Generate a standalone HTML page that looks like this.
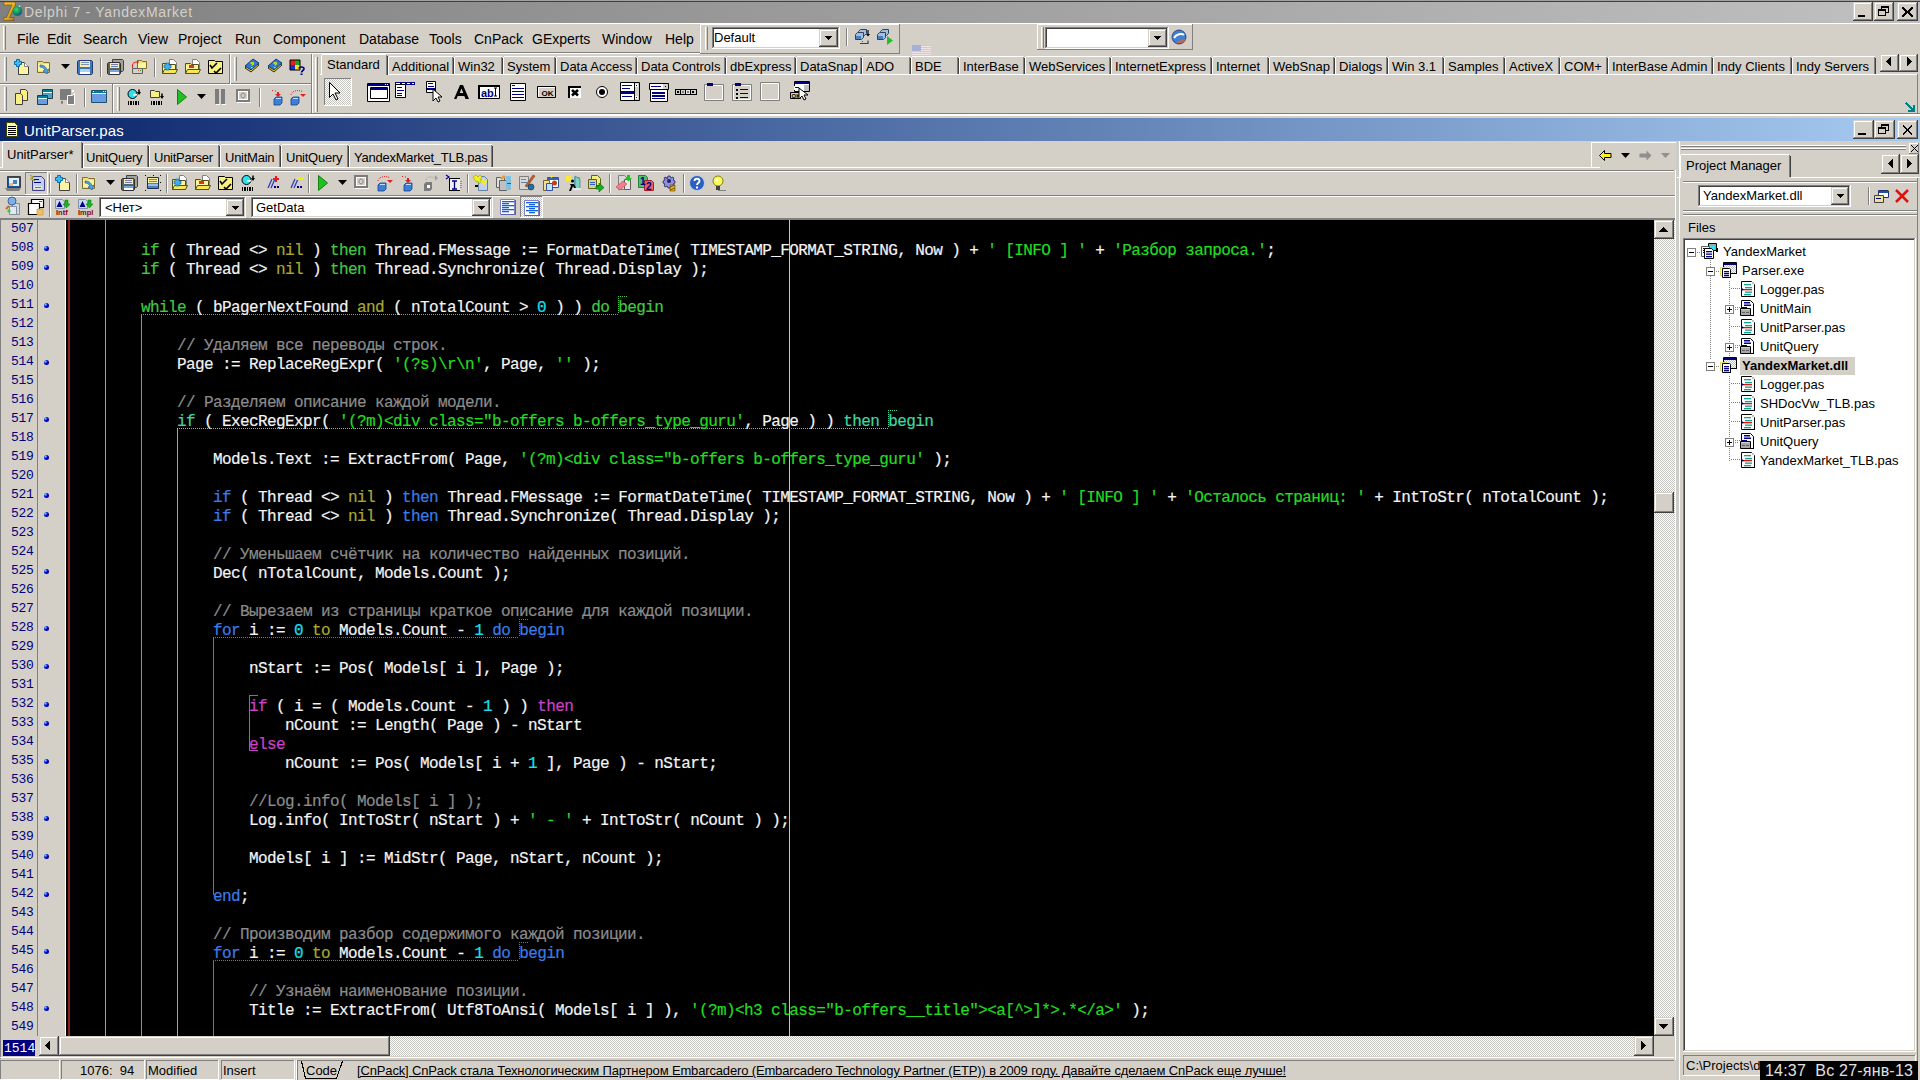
<!DOCTYPE html>
<html><head><meta charset="utf-8"><title>Delphi 7 - YandexMarket</title>
<style>
html,body{margin:0;padding:0;}
body{width:1920px;height:1080px;overflow:hidden;position:relative;background:#d4d0c8;font-family:"Liberation Sans",sans-serif;}
div{position:absolute;box-sizing:border-box;}
.t{white-space:pre;}
.code{font-family:"Liberation Mono",monospace;white-space:pre;}
</style></head><body>
<div style="left:0px;top:0px;width:1920px;height:1px;background:#a0a0a0"></div><div style="left:0px;top:1px;width:1920px;height:1px;background:#404040"></div><div style="left:0px;top:2px;width:1920px;height:21px;background:linear-gradient(to right,#808080,#c0c0c0)"></div><div class="t" style="left:24px;top:4px;font-size:14px;line-height:16px;color:#d4d0c8;letter-spacing:0.7px">Delphi 7 - YandexMarket</div><div style="left:1853px;top:2px;width:20px;height:19px;background:#404040"></div><div style="left:1853px;top:2px;width:19px;height:18px;background:#d4d0c8"></div><div style="left:1854px;top:3px;width:18px;height:17px;background:#808080"></div><div style="left:1854px;top:3px;width:17px;height:16px;background:#ffffff"></div><div style="left:1855px;top:4px;width:16px;height:15px;background:#d4d0c8"></div><div style="left:1874px;top:2px;width:20px;height:19px;background:#404040"></div><div style="left:1874px;top:2px;width:19px;height:18px;background:#d4d0c8"></div><div style="left:1875px;top:3px;width:18px;height:17px;background:#808080"></div><div style="left:1875px;top:3px;width:17px;height:16px;background:#ffffff"></div><div style="left:1876px;top:4px;width:16px;height:15px;background:#d4d0c8"></div><div style="left:1897px;top:2px;width:21px;height:19px;background:#404040"></div><div style="left:1897px;top:2px;width:20px;height:18px;background:#d4d0c8"></div><div style="left:1898px;top:3px;width:19px;height:17px;background:#808080"></div><div style="left:1898px;top:3px;width:18px;height:16px;background:#ffffff"></div><div style="left:1899px;top:4px;width:17px;height:15px;background:#d4d0c8"></div><div style="left:1858px;top:15px;width:7px;height:2px;background:#000"></div><svg style="position:absolute;left:1878px;top:6px" width="11" height="10" viewBox="0 0 11 10" shape-rendering="crispEdges"><path d="M3 0h8v7h-3v-1h2v-4h-6v1h-1z M3 0h8v2h-8z" fill="#000"/><path d="M0 3h8v7h-8z M1 5h6v4h-6z" fill="#000" fill-rule="evenodd"/><path d="M0 3h8v2h-8z" fill="#000"/></svg><svg style="position:absolute;left:1902px;top:7px" width="11" height="10" viewBox="0 0 11 10" shape-rendering="crispEdges"><path d="M1 1L10 9M10 1L1 9" stroke="#000" stroke-width="2" stroke-linecap="square"/></svg><div style="left:0px;top:23px;width:1920px;height:1px;background:#ffffff"></div><div style="left:3px;top:26px;width:1px;height:24px;background:#ffffff"></div><div style="left:4px;top:26px;width:1px;height:24px;background:#d4d0c8"></div><div style="left:5px;top:26px;width:1px;height:24px;background:#808080"></div><div class="t" style="left:17px;top:31px;font-size:14px;line-height:16px;color:#000;">File</div><div class="t" style="left:47px;top:31px;font-size:14px;line-height:16px;color:#000;">Edit</div><div class="t" style="left:83px;top:31px;font-size:14px;line-height:16px;color:#000;">Search</div><div class="t" style="left:138px;top:31px;font-size:14px;line-height:16px;color:#000;">View</div><div class="t" style="left:178px;top:31px;font-size:14px;line-height:16px;color:#000;">Project</div><div class="t" style="left:235px;top:31px;font-size:14px;line-height:16px;color:#000;">Run</div><div class="t" style="left:273px;top:31px;font-size:14px;line-height:16px;color:#000;">Component</div><div class="t" style="left:359px;top:31px;font-size:14px;line-height:16px;color:#000;">Database</div><div class="t" style="left:429px;top:31px;font-size:14px;line-height:16px;color:#000;">Tools</div><div class="t" style="left:474px;top:31px;font-size:14px;line-height:16px;color:#000;">CnPack</div><div class="t" style="left:532px;top:31px;font-size:14px;line-height:16px;color:#000;">GExperts</div><div class="t" style="left:602px;top:31px;font-size:14px;line-height:16px;color:#000;">Window</div><div class="t" style="left:665px;top:31px;font-size:14px;line-height:16px;color:#000;">Help</div><div style="left:0px;top:52px;width:700px;height:1px;background:#808080"></div><div style="left:0px;top:53px;width:700px;height:1px;background:#ffffff"></div><div style="left:700px;top:24px;width:200px;height:30px;background:#808080"></div><div style="left:700px;top:24px;width:199px;height:29px;background:#ffffff"></div><div style="left:701px;top:25px;width:198px;height:28px;background:#d4d0c8"></div><div style="left:705px;top:27px;width:1px;height:23px;background:#ffffff"></div><div style="left:706px;top:27px;width:1px;height:23px;background:#d4d0c8"></div><div style="left:707px;top:27px;width:1px;height:23px;background:#808080"></div><div style="left:712px;top:27px;width:128px;height:22px;background:#ffffff"></div><div style="left:712px;top:27px;width:127px;height:21px;background:#808080"></div><div style="left:713px;top:28px;width:126px;height:20px;background:#d4d0c8"></div><div style="left:713px;top:28px;width:125px;height:19px;background:#404040"></div><div style="left:714px;top:29px;width:124px;height:18px;background:#ffffff"></div><div class="t" style="left:714px;top:30px;font-size:13px;line-height:15px;color:#000;">Default</div><div style="left:819px;top:29px;width:19px;height:18px;background:#404040"></div><div style="left:819px;top:29px;width:18px;height:17px;background:#d4d0c8"></div><div style="left:820px;top:30px;width:17px;height:16px;background:#808080"></div><div style="left:820px;top:30px;width:16px;height:15px;background:#ffffff"></div><div style="left:821px;top:31px;width:15px;height:14px;background:#d4d0c8"></div><svg style="position:absolute;left:825px;top:36px" width="7" height="4" viewBox="0 0 7 4" shape-rendering="crispEdges"><path d="M0 0H7L3.5 4Z" fill="#000"/></svg><div style="left:846px;top:28px;width:1px;height:18px;background:#808080"></div><div style="left:847px;top:28px;width:1px;height:18px;background:#ffffff"></div><div style="left:1037px;top:24px;width:156px;height:26px;background:#808080"></div><div style="left:1037px;top:24px;width:155px;height:25px;background:#ffffff"></div><div style="left:1038px;top:25px;width:154px;height:24px;background:#d4d0c8"></div><div style="left:1041px;top:27px;width:1px;height:21px;background:#ffffff"></div><div style="left:1042px;top:27px;width:1px;height:21px;background:#d4d0c8"></div><div style="left:1043px;top:27px;width:1px;height:21px;background:#808080"></div><div style="left:1045px;top:27px;width:124px;height:22px;background:#ffffff"></div><div style="left:1045px;top:27px;width:123px;height:21px;background:#808080"></div><div style="left:1046px;top:28px;width:122px;height:20px;background:#d4d0c8"></div><div style="left:1046px;top:28px;width:121px;height:19px;background:#404040"></div><div style="left:1047px;top:29px;width:120px;height:18px;background:#ffffff"></div><div style="left:1148px;top:29px;width:19px;height:18px;background:#404040"></div><div style="left:1148px;top:29px;width:18px;height:17px;background:#d4d0c8"></div><div style="left:1149px;top:30px;width:17px;height:16px;background:#808080"></div><div style="left:1149px;top:30px;width:16px;height:15px;background:#ffffff"></div><div style="left:1150px;top:31px;width:15px;height:14px;background:#d4d0c8"></div><svg style="position:absolute;left:1154px;top:36px" width="7" height="4" viewBox="0 0 7 4" shape-rendering="crispEdges"><path d="M0 0H7L3.5 4Z" fill="#000"/></svg><div style="left:0px;top:83px;width:312px;height:1px;background:#808080"></div><div style="left:0px;top:84px;width:312px;height:1px;background:#ffffff"></div><div style="left:4px;top:57px;width:1px;height:24px;background:#ffffff"></div><div style="left:5px;top:57px;width:1px;height:24px;background:#d4d0c8"></div><div style="left:6px;top:57px;width:1px;height:24px;background:#808080"></div><div style="left:4px;top:87px;width:1px;height:24px;background:#ffffff"></div><div style="left:5px;top:87px;width:1px;height:24px;background:#d4d0c8"></div><div style="left:6px;top:87px;width:1px;height:24px;background:#808080"></div><div style="left:229px;top:54px;width:1px;height:30px;background:#808080"></div><div style="left:230px;top:54px;width:1px;height:30px;background:#ffffff"></div><div style="left:234px;top:57px;width:1px;height:24px;background:#ffffff"></div><div style="left:235px;top:57px;width:1px;height:24px;background:#d4d0c8"></div><div style="left:236px;top:57px;width:1px;height:24px;background:#808080"></div><div style="left:112px;top:84px;width:1px;height:30px;background:#808080"></div><div style="left:113px;top:84px;width:1px;height:30px;background:#ffffff"></div><div style="left:117px;top:87px;width:1px;height:24px;background:#ffffff"></div><div style="left:118px;top:87px;width:1px;height:24px;background:#d4d0c8"></div><div style="left:119px;top:87px;width:1px;height:24px;background:#808080"></div><div style="left:311px;top:54px;width:1px;height:60px;background:#808080"></div><div style="left:312px;top:54px;width:1px;height:60px;background:#ffffff"></div><div style="left:315px;top:57px;width:1px;height:55px;background:#ffffff"></div><div style="left:316px;top:57px;width:1px;height:55px;background:#d4d0c8"></div><div style="left:317px;top:57px;width:1px;height:55px;background:#808080"></div><div style="left:320px;top:74px;width:1597px;height:1px;background:#ffffff"></div><div style="left:388px;top:56px;width:66px;height:18px;background:#d4d0c8"></div><div style="left:388px;top:57px;width:1px;height:17px;background:#ffffff"></div><div style="left:389px;top:56px;width:64px;height:1px;background:#ffffff"></div><div style="left:452px;top:57px;width:1px;height:17px;background:#808080"></div><div style="left:453px;top:58px;width:1px;height:16px;background:#404040"></div><div class="t" style="left:392px;top:59px;font-size:13px;line-height:15px;color:#000;">Additional</div><div style="left:454px;top:56px;width:49px;height:18px;background:#d4d0c8"></div><div style="left:454px;top:57px;width:1px;height:17px;background:#ffffff"></div><div style="left:455px;top:56px;width:47px;height:1px;background:#ffffff"></div><div style="left:501px;top:57px;width:1px;height:17px;background:#808080"></div><div style="left:502px;top:58px;width:1px;height:16px;background:#404040"></div><div class="t" style="left:458px;top:59px;font-size:13px;line-height:15px;color:#000;">Win32</div><div style="left:503px;top:56px;width:53px;height:18px;background:#d4d0c8"></div><div style="left:503px;top:57px;width:1px;height:17px;background:#ffffff"></div><div style="left:504px;top:56px;width:51px;height:1px;background:#ffffff"></div><div style="left:554px;top:57px;width:1px;height:17px;background:#808080"></div><div style="left:555px;top:58px;width:1px;height:16px;background:#404040"></div><div class="t" style="left:507px;top:59px;font-size:13px;line-height:15px;color:#000;">System</div><div style="left:556px;top:56px;width:81px;height:18px;background:#d4d0c8"></div><div style="left:556px;top:57px;width:1px;height:17px;background:#ffffff"></div><div style="left:557px;top:56px;width:79px;height:1px;background:#ffffff"></div><div style="left:635px;top:57px;width:1px;height:17px;background:#808080"></div><div style="left:636px;top:58px;width:1px;height:16px;background:#404040"></div><div class="t" style="left:560px;top:59px;font-size:13px;line-height:15px;color:#000;">Data Access</div><div style="left:637px;top:56px;width:89px;height:18px;background:#d4d0c8"></div><div style="left:637px;top:57px;width:1px;height:17px;background:#ffffff"></div><div style="left:638px;top:56px;width:87px;height:1px;background:#ffffff"></div><div style="left:724px;top:57px;width:1px;height:17px;background:#808080"></div><div style="left:725px;top:58px;width:1px;height:16px;background:#404040"></div><div class="t" style="left:641px;top:59px;font-size:13px;line-height:15px;color:#000;">Data Controls</div><div style="left:726px;top:56px;width:70px;height:18px;background:#d4d0c8"></div><div style="left:726px;top:57px;width:1px;height:17px;background:#ffffff"></div><div style="left:727px;top:56px;width:68px;height:1px;background:#ffffff"></div><div style="left:794px;top:57px;width:1px;height:17px;background:#808080"></div><div style="left:795px;top:58px;width:1px;height:16px;background:#404040"></div><div class="t" style="left:730px;top:59px;font-size:13px;line-height:15px;color:#000;">dbExpress</div><div style="left:796px;top:56px;width:66px;height:18px;background:#d4d0c8"></div><div style="left:796px;top:57px;width:1px;height:17px;background:#ffffff"></div><div style="left:797px;top:56px;width:64px;height:1px;background:#ffffff"></div><div style="left:860px;top:57px;width:1px;height:17px;background:#808080"></div><div style="left:861px;top:58px;width:1px;height:16px;background:#404040"></div><div class="t" style="left:800px;top:59px;font-size:13px;line-height:15px;color:#000;">DataSnap</div><div style="left:862px;top:56px;width:49px;height:18px;background:#d4d0c8"></div><div style="left:862px;top:57px;width:1px;height:17px;background:#ffffff"></div><div style="left:863px;top:56px;width:47px;height:1px;background:#ffffff"></div><div style="left:909px;top:57px;width:1px;height:17px;background:#808080"></div><div style="left:910px;top:58px;width:1px;height:16px;background:#404040"></div><div class="t" style="left:866px;top:59px;font-size:13px;line-height:15px;color:#000;">ADO</div><div style="left:911px;top:56px;width:48px;height:18px;background:#d4d0c8"></div><div style="left:911px;top:57px;width:1px;height:17px;background:#ffffff"></div><div style="left:912px;top:56px;width:46px;height:1px;background:#ffffff"></div><div style="left:957px;top:57px;width:1px;height:17px;background:#808080"></div><div style="left:958px;top:58px;width:1px;height:16px;background:#404040"></div><div class="t" style="left:915px;top:59px;font-size:13px;line-height:15px;color:#000;">BDE</div><div style="left:959px;top:56px;width:66px;height:18px;background:#d4d0c8"></div><div style="left:959px;top:57px;width:1px;height:17px;background:#ffffff"></div><div style="left:960px;top:56px;width:64px;height:1px;background:#ffffff"></div><div style="left:1023px;top:57px;width:1px;height:17px;background:#808080"></div><div style="left:1024px;top:58px;width:1px;height:16px;background:#404040"></div><div class="t" style="left:963px;top:59px;font-size:13px;line-height:15px;color:#000;">InterBase</div><div style="left:1025px;top:56px;width:86px;height:18px;background:#d4d0c8"></div><div style="left:1025px;top:57px;width:1px;height:17px;background:#ffffff"></div><div style="left:1026px;top:56px;width:84px;height:1px;background:#ffffff"></div><div style="left:1109px;top:57px;width:1px;height:17px;background:#808080"></div><div style="left:1110px;top:58px;width:1px;height:16px;background:#404040"></div><div class="t" style="left:1029px;top:59px;font-size:13px;line-height:15px;color:#000;">WebServices</div><div style="left:1111px;top:56px;width:101px;height:18px;background:#d4d0c8"></div><div style="left:1111px;top:57px;width:1px;height:17px;background:#ffffff"></div><div style="left:1112px;top:56px;width:99px;height:1px;background:#ffffff"></div><div style="left:1210px;top:57px;width:1px;height:17px;background:#808080"></div><div style="left:1211px;top:58px;width:1px;height:16px;background:#404040"></div><div class="t" style="left:1115px;top:59px;font-size:13px;line-height:15px;color:#000;">InternetExpress</div><div style="left:1212px;top:56px;width:57px;height:18px;background:#d4d0c8"></div><div style="left:1212px;top:57px;width:1px;height:17px;background:#ffffff"></div><div style="left:1213px;top:56px;width:55px;height:1px;background:#ffffff"></div><div style="left:1267px;top:57px;width:1px;height:17px;background:#808080"></div><div style="left:1268px;top:58px;width:1px;height:16px;background:#404040"></div><div class="t" style="left:1216px;top:59px;font-size:13px;line-height:15px;color:#000;">Internet</div><div style="left:1269px;top:56px;width:66px;height:18px;background:#d4d0c8"></div><div style="left:1269px;top:57px;width:1px;height:17px;background:#ffffff"></div><div style="left:1270px;top:56px;width:64px;height:1px;background:#ffffff"></div><div style="left:1333px;top:57px;width:1px;height:17px;background:#808080"></div><div style="left:1334px;top:58px;width:1px;height:16px;background:#404040"></div><div class="t" style="left:1273px;top:59px;font-size:13px;line-height:15px;color:#000;">WebSnap</div><div style="left:1335px;top:56px;width:53px;height:18px;background:#d4d0c8"></div><div style="left:1335px;top:57px;width:1px;height:17px;background:#ffffff"></div><div style="left:1336px;top:56px;width:51px;height:1px;background:#ffffff"></div><div style="left:1386px;top:57px;width:1px;height:17px;background:#808080"></div><div style="left:1387px;top:58px;width:1px;height:16px;background:#404040"></div><div class="t" style="left:1339px;top:59px;font-size:13px;line-height:15px;color:#000;">Dialogs</div><div style="left:1388px;top:56px;width:56px;height:18px;background:#d4d0c8"></div><div style="left:1388px;top:57px;width:1px;height:17px;background:#ffffff"></div><div style="left:1389px;top:56px;width:54px;height:1px;background:#ffffff"></div><div style="left:1442px;top:57px;width:1px;height:17px;background:#808080"></div><div style="left:1443px;top:58px;width:1px;height:16px;background:#404040"></div><div class="t" style="left:1392px;top:59px;font-size:13px;line-height:15px;color:#000;">Win 3.1</div><div style="left:1444px;top:56px;width:61px;height:18px;background:#d4d0c8"></div><div style="left:1444px;top:57px;width:1px;height:17px;background:#ffffff"></div><div style="left:1445px;top:56px;width:59px;height:1px;background:#ffffff"></div><div style="left:1503px;top:57px;width:1px;height:17px;background:#808080"></div><div style="left:1504px;top:58px;width:1px;height:16px;background:#404040"></div><div class="t" style="left:1448px;top:59px;font-size:13px;line-height:15px;color:#000;">Samples</div><div style="left:1505px;top:56px;width:55px;height:18px;background:#d4d0c8"></div><div style="left:1505px;top:57px;width:1px;height:17px;background:#ffffff"></div><div style="left:1506px;top:56px;width:53px;height:1px;background:#ffffff"></div><div style="left:1558px;top:57px;width:1px;height:17px;background:#808080"></div><div style="left:1559px;top:58px;width:1px;height:16px;background:#404040"></div><div class="t" style="left:1509px;top:59px;font-size:13px;line-height:15px;color:#000;">ActiveX</div><div style="left:1560px;top:56px;width:48px;height:18px;background:#d4d0c8"></div><div style="left:1560px;top:57px;width:1px;height:17px;background:#ffffff"></div><div style="left:1561px;top:56px;width:46px;height:1px;background:#ffffff"></div><div style="left:1606px;top:57px;width:1px;height:17px;background:#808080"></div><div style="left:1607px;top:58px;width:1px;height:16px;background:#404040"></div><div class="t" style="left:1564px;top:59px;font-size:13px;line-height:15px;color:#000;">COM+</div><div style="left:1608px;top:56px;width:105px;height:18px;background:#d4d0c8"></div><div style="left:1608px;top:57px;width:1px;height:17px;background:#ffffff"></div><div style="left:1609px;top:56px;width:103px;height:1px;background:#ffffff"></div><div style="left:1711px;top:57px;width:1px;height:17px;background:#808080"></div><div style="left:1712px;top:58px;width:1px;height:16px;background:#404040"></div><div class="t" style="left:1612px;top:59px;font-size:13px;line-height:15px;color:#000;">InterBase Admin</div><div style="left:1713px;top:56px;width:79px;height:18px;background:#d4d0c8"></div><div style="left:1713px;top:57px;width:1px;height:17px;background:#ffffff"></div><div style="left:1714px;top:56px;width:77px;height:1px;background:#ffffff"></div><div style="left:1790px;top:57px;width:1px;height:17px;background:#808080"></div><div style="left:1791px;top:58px;width:1px;height:16px;background:#404040"></div><div class="t" style="left:1717px;top:59px;font-size:13px;line-height:15px;color:#000;">Indy Clients</div><div style="left:1792px;top:56px;width:84px;height:18px;background:#d4d0c8"></div><div style="left:1792px;top:57px;width:1px;height:17px;background:#ffffff"></div><div style="left:1793px;top:56px;width:82px;height:1px;background:#ffffff"></div><div style="left:1874px;top:57px;width:1px;height:17px;background:#808080"></div><div style="left:1875px;top:58px;width:1px;height:16px;background:#404040"></div><div class="t" style="left:1796px;top:59px;font-size:13px;line-height:15px;color:#000;">Indy Servers</div><div style="left:321px;top:54px;width:67px;height:21px;background:#d4d0c8"></div><div style="left:321px;top:55px;width:1px;height:20px;background:#ffffff"></div><div style="left:322px;top:54px;width:64px;height:1px;background:#ffffff"></div><div style="left:386px;top:55px;width:1px;height:20px;background:#808080"></div><div style="left:387px;top:56px;width:1px;height:19px;background:#404040"></div><div class="t" style="left:327px;top:57px;font-size:13px;line-height:15px;color:#000;">Standard</div><div style="left:1880px;top:54px;width:19px;height:18px;background:#404040"></div><div style="left:1880px;top:54px;width:18px;height:17px;background:#d4d0c8"></div><div style="left:1881px;top:55px;width:17px;height:16px;background:#808080"></div><div style="left:1881px;top:55px;width:16px;height:15px;background:#ffffff"></div><div style="left:1882px;top:56px;width:15px;height:14px;background:#d4d0c8"></div><div style="left:1899px;top:54px;width:19px;height:18px;background:#404040"></div><div style="left:1899px;top:54px;width:18px;height:17px;background:#d4d0c8"></div><div style="left:1900px;top:55px;width:17px;height:16px;background:#808080"></div><div style="left:1900px;top:55px;width:16px;height:15px;background:#ffffff"></div><div style="left:1901px;top:56px;width:15px;height:14px;background:#d4d0c8"></div><svg style="position:absolute;left:1886px;top:57px" width="5" height="9" viewBox="0 0 5 9" shape-rendering="crispEdges"><path d="M5 0V9L0 4.5Z" fill="#000"/></svg><svg style="position:absolute;left:1907px;top:57px" width="5" height="9" viewBox="0 0 5 9" shape-rendering="crispEdges"><path d="M0 0V9L5 4.5Z" fill="#000"/></svg><div style="left:1917px;top:74px;width:1px;height:40px;background:#808080"></div><svg style="position:absolute;left:1905px;top:102px" width="11" height="10" viewBox="0 0 11 10" shape-rendering="crispEdges"><path d="M1 1L8 8M9 3V9H3" fill="none" stroke="#008080" stroke-width="2"/></svg><div style="left:324px;top:78px;width:28px;height:28px;background:#fff"></div><div style="left:324px;top:78px;width:27px;height:27px;background:#808080"></div><div style="left:325px;top:79px;width:26px;height:26px;background:repeating-conic-gradient(#ffffff 0% 25%, #c4c4c0 0% 50%) 0 0/2px 2px"></div><div style="left:0px;top:113px;width:1920px;height:1px;background:#808080"></div><div style="left:0px;top:114px;width:1920px;height:1px;background:#ffffff"></div><div style="left:0px;top:115px;width:1920px;height:1px;background:#ffffff"></div><div style="left:0px;top:116px;width:1920px;height:2px;background:#d4d0c8"></div><div style="left:0px;top:118px;width:1920px;height:23px;background:linear-gradient(to right,#0a246a,#a6caf0)"></div><div class="t" style="left:24px;top:122px;font-size:15px;line-height:17px;color:#ffffff;letter-spacing:0.1px">UnitParser.pas</div><div style="left:1853px;top:120px;width:21px;height:19px;background:#404040"></div><div style="left:1853px;top:120px;width:20px;height:18px;background:#d4d0c8"></div><div style="left:1854px;top:121px;width:19px;height:17px;background:#808080"></div><div style="left:1854px;top:121px;width:18px;height:16px;background:#ffffff"></div><div style="left:1855px;top:122px;width:17px;height:15px;background:#d4d0c8"></div><div style="left:1874px;top:120px;width:21px;height:19px;background:#404040"></div><div style="left:1874px;top:120px;width:20px;height:18px;background:#d4d0c8"></div><div style="left:1875px;top:121px;width:19px;height:17px;background:#808080"></div><div style="left:1875px;top:121px;width:18px;height:16px;background:#ffffff"></div><div style="left:1876px;top:122px;width:17px;height:15px;background:#d4d0c8"></div><div style="left:1897px;top:120px;width:21px;height:19px;background:#404040"></div><div style="left:1897px;top:120px;width:20px;height:18px;background:#d4d0c8"></div><div style="left:1898px;top:121px;width:19px;height:17px;background:#808080"></div><div style="left:1898px;top:121px;width:18px;height:16px;background:#ffffff"></div><div style="left:1899px;top:122px;width:17px;height:15px;background:#d4d0c8"></div><div style="left:1858px;top:133px;width:8px;height:2px;background:#000"></div><svg style="position:absolute;left:1878px;top:124px" width="11" height="10" viewBox="0 0 11 10" shape-rendering="crispEdges"><path d="M3 0h8v7h-3v-1h2v-4h-6v1h-1z M3 0h8v2h-8z" fill="#000"/><path d="M0 3h8v7h-8z M1 5h6v4h-6z" fill="#000" fill-rule="evenodd"/><path d="M0 3h8v2h-8z" fill="#000"/></svg><svg style="position:absolute;left:1902px;top:125px" width="11" height="10" viewBox="0 0 11 10" shape-rendering="crispEdges"><path d="M1.5 1L9.5 9M9.5 1L1.5 9" stroke="#000" stroke-width="2" stroke-linecap="square"/></svg><div style="left:0px;top:167px;width:1600px;height:1px;background:#ffffff"></div><div style="left:83px;top:145px;width:1px;height:22px;background:#ffffff"></div><div style="left:84px;top:144px;width:64px;height:1px;background:#ffffff"></div><div style="left:147px;top:145px;width:1px;height:22px;background:#808080"></div><div style="left:148px;top:146px;width:1px;height:21px;background:#404040"></div><div class="t" style="left:86px;top:150px;font-size:13px;line-height:15px;color:#000;letter-spacing:-0.25px">UnitQuery</div><div style="left:149px;top:145px;width:1px;height:22px;background:#ffffff"></div><div style="left:150px;top:144px;width:69px;height:1px;background:#ffffff"></div><div style="left:218px;top:145px;width:1px;height:22px;background:#808080"></div><div style="left:219px;top:146px;width:1px;height:21px;background:#404040"></div><div class="t" style="left:154px;top:150px;font-size:13px;line-height:15px;color:#000;letter-spacing:-0.25px">UnitParser</div><div style="left:220px;top:145px;width:1px;height:22px;background:#ffffff"></div><div style="left:221px;top:144px;width:59px;height:1px;background:#ffffff"></div><div style="left:279px;top:145px;width:1px;height:22px;background:#808080"></div><div style="left:280px;top:146px;width:1px;height:21px;background:#404040"></div><div class="t" style="left:225px;top:150px;font-size:13px;line-height:15px;color:#000;letter-spacing:-0.25px">UnitMain</div><div style="left:281px;top:145px;width:1px;height:22px;background:#ffffff"></div><div style="left:282px;top:144px;width:66px;height:1px;background:#ffffff"></div><div style="left:347px;top:145px;width:1px;height:22px;background:#808080"></div><div style="left:348px;top:146px;width:1px;height:21px;background:#404040"></div><div class="t" style="left:286px;top:150px;font-size:13px;line-height:15px;color:#000;letter-spacing:-0.25px">UnitQuery</div><div style="left:349px;top:145px;width:1px;height:22px;background:#ffffff"></div><div style="left:350px;top:144px;width:142px;height:1px;background:#ffffff"></div><div style="left:491px;top:145px;width:1px;height:22px;background:#808080"></div><div style="left:492px;top:146px;width:1px;height:21px;background:#404040"></div><div class="t" style="left:354px;top:150px;font-size:13px;line-height:15px;color:#000;letter-spacing:-0.25px">YandexMarket_TLB.pas</div><div style="left:2px;top:141px;width:81px;height:27px;background:#d4d0c8"></div><div style="left:2px;top:142px;width:1px;height:26px;background:#ffffff"></div><div style="left:3px;top:141px;width:78px;height:1px;background:#ffffff"></div><div style="left:81px;top:142px;width:1px;height:26px;background:#808080"></div><div style="left:82px;top:143px;width:1px;height:25px;background:#404040"></div><div class="t" style="left:7px;top:147px;font-size:13px;line-height:15px;color:#000;">UnitParser*</div><div style="left:1591px;top:142px;width:85px;height:1px;background:#ffffff"></div><div style="left:1591px;top:143px;width:1px;height:24px;background:#ffffff"></div><div style="left:0px;top:170px;width:1674px;height:1px;background:#808080"></div><div style="left:0px;top:171px;width:1674px;height:1px;background:#ffffff"></div><div style="left:0px;top:195px;width:1677px;height:1px;background:#808080"></div><div style="left:0px;top:196px;width:1677px;height:1px;background:#ffffff"></div><div style="left:99px;top:197px;width:147px;height:21px;background:#ffffff"></div><div style="left:99px;top:197px;width:146px;height:20px;background:#808080"></div><div style="left:100px;top:198px;width:145px;height:19px;background:#d4d0c8"></div><div style="left:100px;top:198px;width:144px;height:18px;background:#404040"></div><div style="left:101px;top:199px;width:143px;height:17px;background:#ffffff"></div><div class="t" style="left:105px;top:200px;font-size:13px;line-height:15px;color:#000;">&lt;Нет&gt;</div><div style="left:226px;top:199px;width:18px;height:17px;background:#404040"></div><div style="left:226px;top:199px;width:17px;height:16px;background:#d4d0c8"></div><div style="left:227px;top:200px;width:16px;height:15px;background:#808080"></div><div style="left:227px;top:200px;width:15px;height:14px;background:#ffffff"></div><div style="left:228px;top:201px;width:14px;height:13px;background:#d4d0c8"></div><svg style="position:absolute;left:232px;top:206px" width="7" height="4" viewBox="0 0 7 4" shape-rendering="crispEdges"><path d="M0 0H7L3.5 4Z" fill="#000"/></svg><div style="left:251px;top:197px;width:242px;height:21px;background:#ffffff"></div><div style="left:251px;top:197px;width:241px;height:20px;background:#808080"></div><div style="left:252px;top:198px;width:240px;height:19px;background:#d4d0c8"></div><div style="left:252px;top:198px;width:239px;height:18px;background:#404040"></div><div style="left:253px;top:199px;width:238px;height:17px;background:#ffffff"></div><div class="t" style="left:256px;top:200px;font-size:13px;line-height:15px;color:#000;">GetData</div><div style="left:472px;top:199px;width:18px;height:17px;background:#404040"></div><div style="left:472px;top:199px;width:17px;height:16px;background:#d4d0c8"></div><div style="left:473px;top:200px;width:16px;height:15px;background:#808080"></div><div style="left:473px;top:200px;width:15px;height:14px;background:#ffffff"></div><div style="left:474px;top:201px;width:14px;height:13px;background:#d4d0c8"></div><svg style="position:absolute;left:478px;top:206px" width="7" height="4" viewBox="0 0 7 4" shape-rendering="crispEdges"><path d="M0 0H7L3.5 4Z" fill="#000"/></svg><div style="left:0px;top:218px;width:1677px;height:1px;background:#808080"></div><div style="left:0px;top:219px;width:1677px;height:1px;background:#ffffff"></div><div style="left:0px;top:219px;width:1px;height:840px;background:#808080"></div><div style="left:1px;top:220px;width:37px;height:816px;background:#d4d0c8"></div><div style="left:37px;top:220px;width:1px;height:816px;background:#808080"></div><div style="left:38px;top:220px;width:27px;height:816px;background:#d4d0c8"></div><div style="left:65px;top:220px;width:1px;height:816px;background:#ffffff"></div><div style="left:66px;top:220px;width:1588px;height:816px;background:#000"></div><div style="left:0px;top:219px;width:1677px;height:1px;background:#808080"></div><div style="left:68px;top:220px;width:2px;height:816px;background:#8c2020"></div><div style="left:105px;top:220px;width:1px;height:816px;background:#d8904c"></div><div style="left:141px;top:314px;width:1px;height:722px;background:#44c844"></div><div style="left:177px;top:428px;width:1px;height:608px;background:#40d6a0"></div><div style="left:213px;top:637px;width:1px;height:258px;background:#3c7ce8"></div><div style="left:213px;top:960px;width:1px;height:76px;background:#3c7ce8"></div><div style="left:249px;top:695px;width:1px;height:56px;background:#cc40cc"></div><div style="left:249px;top:695px;width:9px;height:1px;background:#cc40cc"></div><div style="left:249px;top:750px;width:9px;height:1px;background:#cc40cc"></div><div style="left:789px;top:220px;width:1px;height:816px;background:#c4c4c4"></div><div style="left:141px;top:314px;width:477px;height:1px;background:repeating-linear-gradient(to right,#44c844 0 1px,transparent 1px 2px)"></div><div style="left:618px;top:296px;width:1px;height:18px;background:repeating-linear-gradient(to bottom,#44c844 0 1px,transparent 1px 2px)"></div><div style="left:618px;top:296px;width:9px;height:1px;background:repeating-linear-gradient(to right,#44c844 0 1px,transparent 1px 2px)"></div><div style="left:177px;top:428px;width:711px;height:1px;background:repeating-linear-gradient(to right,#40d6a0 0 1px,transparent 1px 2px)"></div><div style="left:888px;top:410px;width:1px;height:18px;background:repeating-linear-gradient(to bottom,#40d6a0 0 1px,transparent 1px 2px)"></div><div style="left:888px;top:410px;width:9px;height:1px;background:repeating-linear-gradient(to right,#40d6a0 0 1px,transparent 1px 2px)"></div><div style="left:213px;top:637px;width:306px;height:1px;background:repeating-linear-gradient(to right,#3c7ce8 0 1px,transparent 1px 2px)"></div><div style="left:519px;top:619px;width:1px;height:18px;background:repeating-linear-gradient(to bottom,#3c7ce8 0 1px,transparent 1px 2px)"></div><div style="left:519px;top:619px;width:9px;height:1px;background:repeating-linear-gradient(to right,#3c7ce8 0 1px,transparent 1px 2px)"></div><div style="left:213px;top:960px;width:306px;height:1px;background:repeating-linear-gradient(to right,#3c7ce8 0 1px,transparent 1px 2px)"></div><div style="left:519px;top:942px;width:1px;height:18px;background:repeating-linear-gradient(to bottom,#3c7ce8 0 1px,transparent 1px 2px)"></div><div style="left:519px;top:942px;width:9px;height:1px;background:repeating-linear-gradient(to right,#3c7ce8 0 1px,transparent 1px 2px)"></div><div class="code" style="left:69px;top:242px;font-size:16px;line-height:19px;letter-spacing:-0.6px;-webkit-text-stroke:0.2px currentColor"><span style="color:#f4f4f4">        </span><span style="color:#44c844">if</span><span style="color:#f4f4f4"> ( Thread &lt;&gt; </span><span style="color:#a8a830">nil</span><span style="color:#f4f4f4"> ) </span><span style="color:#44c844">then</span><span style="color:#f4f4f4"> Thread.FMessage := FormatDateTime( TIMESTAMP_FORMAT_STRING, Now ) + </span><span style="color:#22dd22">&#x27; [INFO ] &#x27;</span><span style="color:#f4f4f4"> + </span><span style="color:#22dd22">&#x27;Разбор запроса.&#x27;</span><span style="color:#f4f4f4">;</span></div><div class="code" style="left:69px;top:261px;font-size:16px;line-height:19px;letter-spacing:-0.6px;-webkit-text-stroke:0.2px currentColor"><span style="color:#f4f4f4">        </span><span style="color:#44c844">if</span><span style="color:#f4f4f4"> ( Thread &lt;&gt; </span><span style="color:#a8a830">nil</span><span style="color:#f4f4f4"> ) </span><span style="color:#44c844">then</span><span style="color:#f4f4f4"> Thread.Synchronize( Thread.Display );</span></div><div class="code" style="left:69px;top:299px;font-size:16px;line-height:19px;letter-spacing:-0.6px;-webkit-text-stroke:0.2px currentColor"><span style="color:#f4f4f4">        </span><span style="color:#44c844">while</span><span style="color:#f4f4f4"> ( bPagerNextFound </span><span style="color:#a8a830">and</span><span style="color:#f4f4f4"> ( nTotalCount &gt; </span><span style="color:#18e0f0">0</span><span style="color:#f4f4f4"> ) ) </span><span style="color:#44c844">do</span><span style="color:#f4f4f4"> </span><span style="color:#44c844">begin</span></div><div class="code" style="left:69px;top:337px;font-size:16px;line-height:19px;letter-spacing:-0.6px;-webkit-text-stroke:0.2px currentColor"><span style="color:#f4f4f4">            </span><span style="color:#8c8c8c">// Удаляем все переводы строк.</span></div><div class="code" style="left:69px;top:356px;font-size:16px;line-height:19px;letter-spacing:-0.6px;-webkit-text-stroke:0.2px currentColor"><span style="color:#f4f4f4">            Page := ReplaceRegExpr( </span><span style="color:#22dd22">&#x27;(?s)\r\n&#x27;</span><span style="color:#f4f4f4">, Page, </span><span style="color:#22dd22">&#x27;&#x27;</span><span style="color:#f4f4f4"> );</span></div><div class="code" style="left:69px;top:394px;font-size:16px;line-height:19px;letter-spacing:-0.6px;-webkit-text-stroke:0.2px currentColor"><span style="color:#f4f4f4">            </span><span style="color:#8c8c8c">// Разделяем описание каждой модели.</span></div><div class="code" style="left:69px;top:413px;font-size:16px;line-height:19px;letter-spacing:-0.6px;-webkit-text-stroke:0.2px currentColor"><span style="color:#f4f4f4">            </span><span style="color:#40d6a0">if</span><span style="color:#f4f4f4"> ( ExecRegExpr( </span><span style="color:#22dd22">&#x27;(?m)&lt;div class=&quot;b-offers b-offers_type_guru&#x27;</span><span style="color:#f4f4f4">, Page ) ) </span><span style="color:#40d6a0">then</span><span style="color:#f4f4f4"> </span><span style="color:#40d6a0">begin</span></div><div class="code" style="left:69px;top:451px;font-size:16px;line-height:19px;letter-spacing:-0.6px;-webkit-text-stroke:0.2px currentColor"><span style="color:#f4f4f4">                Models.Text := ExtractFrom( Page, </span><span style="color:#22dd22">&#x27;(?m)&lt;div class=&quot;b-offers b-offers_type_guru&#x27;</span><span style="color:#f4f4f4"> );</span></div><div class="code" style="left:69px;top:489px;font-size:16px;line-height:19px;letter-spacing:-0.6px;-webkit-text-stroke:0.2px currentColor"><span style="color:#f4f4f4">                </span><span style="color:#3c7ce8">if</span><span style="color:#f4f4f4"> ( Thread &lt;&gt; </span><span style="color:#a8a830">nil</span><span style="color:#f4f4f4"> ) </span><span style="color:#3c7ce8">then</span><span style="color:#f4f4f4"> Thread.FMessage := FormatDateTime( TIMESTAMP_FORMAT_STRING, Now ) + </span><span style="color:#22dd22">&#x27; [INFO ] &#x27;</span><span style="color:#f4f4f4"> + </span><span style="color:#22dd22">&#x27;Осталось страниц: &#x27;</span><span style="color:#f4f4f4"> + IntToStr( nTotalCount );</span></div><div class="code" style="left:69px;top:508px;font-size:16px;line-height:19px;letter-spacing:-0.6px;-webkit-text-stroke:0.2px currentColor"><span style="color:#f4f4f4">                </span><span style="color:#3c7ce8">if</span><span style="color:#f4f4f4"> ( Thread &lt;&gt; </span><span style="color:#a8a830">nil</span><span style="color:#f4f4f4"> ) </span><span style="color:#3c7ce8">then</span><span style="color:#f4f4f4"> Thread.Synchronize( Thread.Display );</span></div><div class="code" style="left:69px;top:546px;font-size:16px;line-height:19px;letter-spacing:-0.6px;-webkit-text-stroke:0.2px currentColor"><span style="color:#f4f4f4">                </span><span style="color:#8c8c8c">// Уменьшаем счётчик на количество найденных позиций.</span></div><div class="code" style="left:69px;top:565px;font-size:16px;line-height:19px;letter-spacing:-0.6px;-webkit-text-stroke:0.2px currentColor"><span style="color:#f4f4f4">                Dec( nTotalCount, Models.Count );</span></div><div class="code" style="left:69px;top:603px;font-size:16px;line-height:19px;letter-spacing:-0.6px;-webkit-text-stroke:0.2px currentColor"><span style="color:#f4f4f4">                </span><span style="color:#8c8c8c">// Вырезаем из страницы краткое описание для каждой позиции.</span></div><div class="code" style="left:69px;top:622px;font-size:16px;line-height:19px;letter-spacing:-0.6px;-webkit-text-stroke:0.2px currentColor"><span style="color:#f4f4f4">                </span><span style="color:#3c7ce8">for</span><span style="color:#f4f4f4"> i := </span><span style="color:#18e0f0">0</span><span style="color:#f4f4f4"> </span><span style="color:#a8a830">to</span><span style="color:#f4f4f4"> Models.Count - </span><span style="color:#18e0f0">1</span><span style="color:#f4f4f4"> </span><span style="color:#3c7ce8">do</span><span style="color:#f4f4f4"> </span><span style="color:#3c7ce8">begin</span></div><div class="code" style="left:69px;top:660px;font-size:16px;line-height:19px;letter-spacing:-0.6px;-webkit-text-stroke:0.2px currentColor"><span style="color:#f4f4f4">                    nStart := Pos( Models[ i ], Page );</span></div><div class="code" style="left:69px;top:698px;font-size:16px;line-height:19px;letter-spacing:-0.6px;-webkit-text-stroke:0.2px currentColor"><span style="color:#f4f4f4">                    </span><span style="color:#cc40cc">if</span><span style="color:#f4f4f4"> ( i = ( Models.Count - </span><span style="color:#18e0f0">1</span><span style="color:#f4f4f4"> ) ) </span><span style="color:#cc40cc">then</span></div><div class="code" style="left:69px;top:717px;font-size:16px;line-height:19px;letter-spacing:-0.6px;-webkit-text-stroke:0.2px currentColor"><span style="color:#f4f4f4">                        nCount := Length( Page ) - nStart</span></div><div class="code" style="left:69px;top:736px;font-size:16px;line-height:19px;letter-spacing:-0.6px;-webkit-text-stroke:0.2px currentColor"><span style="color:#f4f4f4">                    </span><span style="color:#cc40cc">else</span></div><div class="code" style="left:69px;top:755px;font-size:16px;line-height:19px;letter-spacing:-0.6px;-webkit-text-stroke:0.2px currentColor"><span style="color:#f4f4f4">                        nCount := Pos( Models[ i + </span><span style="color:#18e0f0">1</span><span style="color:#f4f4f4"> ], Page ) - nStart;</span></div><div class="code" style="left:69px;top:793px;font-size:16px;line-height:19px;letter-spacing:-0.6px;-webkit-text-stroke:0.2px currentColor"><span style="color:#f4f4f4">                    </span><span style="color:#8c8c8c">//Log.info( Models[ i ] );</span></div><div class="code" style="left:69px;top:812px;font-size:16px;line-height:19px;letter-spacing:-0.6px;-webkit-text-stroke:0.2px currentColor"><span style="color:#f4f4f4">                    Log.info( IntToStr( nStart ) + </span><span style="color:#22dd22">&#x27; - &#x27;</span><span style="color:#f4f4f4"> + IntToStr( nCount ) );</span></div><div class="code" style="left:69px;top:850px;font-size:16px;line-height:19px;letter-spacing:-0.6px;-webkit-text-stroke:0.2px currentColor"><span style="color:#f4f4f4">                    Models[ i ] := MidStr( Page, nStart, nCount );</span></div><div class="code" style="left:69px;top:888px;font-size:16px;line-height:19px;letter-spacing:-0.6px;-webkit-text-stroke:0.2px currentColor"><span style="color:#f4f4f4">                </span><span style="color:#3c7ce8">end</span><span style="color:#f4f4f4">;</span></div><div class="code" style="left:69px;top:926px;font-size:16px;line-height:19px;letter-spacing:-0.6px;-webkit-text-stroke:0.2px currentColor"><span style="color:#f4f4f4">                </span><span style="color:#8c8c8c">// Производим разбор содержимого каждой позиции.</span></div><div class="code" style="left:69px;top:945px;font-size:16px;line-height:19px;letter-spacing:-0.6px;-webkit-text-stroke:0.2px currentColor"><span style="color:#f4f4f4">                </span><span style="color:#3c7ce8">for</span><span style="color:#f4f4f4"> i := </span><span style="color:#18e0f0">0</span><span style="color:#f4f4f4"> </span><span style="color:#a8a830">to</span><span style="color:#f4f4f4"> Models.Count - </span><span style="color:#18e0f0">1</span><span style="color:#f4f4f4"> </span><span style="color:#3c7ce8">do</span><span style="color:#f4f4f4"> </span><span style="color:#3c7ce8">begin</span></div><div class="code" style="left:69px;top:983px;font-size:16px;line-height:19px;letter-spacing:-0.6px;-webkit-text-stroke:0.2px currentColor"><span style="color:#f4f4f4">                    </span><span style="color:#8c8c8c">// Узнаём наименование позиции.</span></div><div class="code" style="left:69px;top:1002px;font-size:16px;line-height:19px;letter-spacing:-0.6px;-webkit-text-stroke:0.2px currentColor"><span style="color:#f4f4f4">                    Title := ExtractFrom( Utf8ToAnsi( Models[ i ] ), </span><span style="color:#22dd22">&#x27;(?m)&lt;h3 class=&quot;b-offers__title&quot;&gt;&lt;a[^&gt;]*&gt;.*&lt;/a&gt;&#x27;</span><span style="color:#f4f4f4"> );</span></div><div class="code" style="left:11px;top:221px;font-size:13px;line-height:15px;color:#000080;letter-spacing:-0.3px">507</div><div class="code" style="left:11px;top:240px;font-size:13px;line-height:15px;color:#000080;letter-spacing:-0.3px">508</div><div style="left:43.5px;top:245.5px;width:5px;height:5px;background:radial-gradient(circle at 30% 30%,#60d0ff 0,#0000d0 45%,#000080 100%);border-radius:50%"></div><div class="code" style="left:11px;top:259px;font-size:13px;line-height:15px;color:#000080;letter-spacing:-0.3px">509</div><div style="left:43.5px;top:264.5px;width:5px;height:5px;background:radial-gradient(circle at 30% 30%,#60d0ff 0,#0000d0 45%,#000080 100%);border-radius:50%"></div><div class="code" style="left:11px;top:278px;font-size:13px;line-height:15px;color:#000080;letter-spacing:-0.3px">510</div><div class="code" style="left:11px;top:297px;font-size:13px;line-height:15px;color:#000080;letter-spacing:-0.3px">511</div><div style="left:43.5px;top:302.5px;width:5px;height:5px;background:radial-gradient(circle at 30% 30%,#60d0ff 0,#0000d0 45%,#000080 100%);border-radius:50%"></div><div class="code" style="left:11px;top:316px;font-size:13px;line-height:15px;color:#000080;letter-spacing:-0.3px">512</div><div class="code" style="left:11px;top:335px;font-size:13px;line-height:15px;color:#000080;letter-spacing:-0.3px">513</div><div class="code" style="left:11px;top:354px;font-size:13px;line-height:15px;color:#000080;letter-spacing:-0.3px">514</div><div style="left:43.5px;top:359.5px;width:5px;height:5px;background:radial-gradient(circle at 30% 30%,#60d0ff 0,#0000d0 45%,#000080 100%);border-radius:50%"></div><div class="code" style="left:11px;top:373px;font-size:13px;line-height:15px;color:#000080;letter-spacing:-0.3px">515</div><div class="code" style="left:11px;top:392px;font-size:13px;line-height:15px;color:#000080;letter-spacing:-0.3px">516</div><div class="code" style="left:11px;top:411px;font-size:13px;line-height:15px;color:#000080;letter-spacing:-0.3px">517</div><div style="left:43.5px;top:416.5px;width:5px;height:5px;background:radial-gradient(circle at 30% 30%,#60d0ff 0,#0000d0 45%,#000080 100%);border-radius:50%"></div><div class="code" style="left:11px;top:430px;font-size:13px;line-height:15px;color:#000080;letter-spacing:-0.3px">518</div><div class="code" style="left:11px;top:449px;font-size:13px;line-height:15px;color:#000080;letter-spacing:-0.3px">519</div><div style="left:43.5px;top:454.5px;width:5px;height:5px;background:radial-gradient(circle at 30% 30%,#60d0ff 0,#0000d0 45%,#000080 100%);border-radius:50%"></div><div class="code" style="left:11px;top:468px;font-size:13px;line-height:15px;color:#000080;letter-spacing:-0.3px">520</div><div class="code" style="left:11px;top:487px;font-size:13px;line-height:15px;color:#000080;letter-spacing:-0.3px">521</div><div style="left:43.5px;top:492.5px;width:5px;height:5px;background:radial-gradient(circle at 30% 30%,#60d0ff 0,#0000d0 45%,#000080 100%);border-radius:50%"></div><div class="code" style="left:11px;top:506px;font-size:13px;line-height:15px;color:#000080;letter-spacing:-0.3px">522</div><div style="left:43.5px;top:511.5px;width:5px;height:5px;background:radial-gradient(circle at 30% 30%,#60d0ff 0,#0000d0 45%,#000080 100%);border-radius:50%"></div><div class="code" style="left:11px;top:525px;font-size:13px;line-height:15px;color:#000080;letter-spacing:-0.3px">523</div><div class="code" style="left:11px;top:544px;font-size:13px;line-height:15px;color:#000080;letter-spacing:-0.3px">524</div><div class="code" style="left:11px;top:563px;font-size:13px;line-height:15px;color:#000080;letter-spacing:-0.3px">525</div><div style="left:43.5px;top:568.5px;width:5px;height:5px;background:radial-gradient(circle at 30% 30%,#60d0ff 0,#0000d0 45%,#000080 100%);border-radius:50%"></div><div class="code" style="left:11px;top:582px;font-size:13px;line-height:15px;color:#000080;letter-spacing:-0.3px">526</div><div class="code" style="left:11px;top:601px;font-size:13px;line-height:15px;color:#000080;letter-spacing:-0.3px">527</div><div class="code" style="left:11px;top:620px;font-size:13px;line-height:15px;color:#000080;letter-spacing:-0.3px">528</div><div style="left:43.5px;top:625.5px;width:5px;height:5px;background:radial-gradient(circle at 30% 30%,#60d0ff 0,#0000d0 45%,#000080 100%);border-radius:50%"></div><div class="code" style="left:11px;top:639px;font-size:13px;line-height:15px;color:#000080;letter-spacing:-0.3px">529</div><div class="code" style="left:11px;top:658px;font-size:13px;line-height:15px;color:#000080;letter-spacing:-0.3px">530</div><div style="left:43.5px;top:663.5px;width:5px;height:5px;background:radial-gradient(circle at 30% 30%,#60d0ff 0,#0000d0 45%,#000080 100%);border-radius:50%"></div><div class="code" style="left:11px;top:677px;font-size:13px;line-height:15px;color:#000080;letter-spacing:-0.3px">531</div><div class="code" style="left:11px;top:696px;font-size:13px;line-height:15px;color:#000080;letter-spacing:-0.3px">532</div><div style="left:43.5px;top:701.5px;width:5px;height:5px;background:radial-gradient(circle at 30% 30%,#60d0ff 0,#0000d0 45%,#000080 100%);border-radius:50%"></div><div class="code" style="left:11px;top:715px;font-size:13px;line-height:15px;color:#000080;letter-spacing:-0.3px">533</div><div style="left:43.5px;top:720.5px;width:5px;height:5px;background:radial-gradient(circle at 30% 30%,#60d0ff 0,#0000d0 45%,#000080 100%);border-radius:50%"></div><div class="code" style="left:11px;top:734px;font-size:13px;line-height:15px;color:#000080;letter-spacing:-0.3px">534</div><div class="code" style="left:11px;top:753px;font-size:13px;line-height:15px;color:#000080;letter-spacing:-0.3px">535</div><div style="left:43.5px;top:758.5px;width:5px;height:5px;background:radial-gradient(circle at 30% 30%,#60d0ff 0,#0000d0 45%,#000080 100%);border-radius:50%"></div><div class="code" style="left:11px;top:772px;font-size:13px;line-height:15px;color:#000080;letter-spacing:-0.3px">536</div><div class="code" style="left:11px;top:791px;font-size:13px;line-height:15px;color:#000080;letter-spacing:-0.3px">537</div><div class="code" style="left:11px;top:810px;font-size:13px;line-height:15px;color:#000080;letter-spacing:-0.3px">538</div><div style="left:43.5px;top:815.5px;width:5px;height:5px;background:radial-gradient(circle at 30% 30%,#60d0ff 0,#0000d0 45%,#000080 100%);border-radius:50%"></div><div class="code" style="left:11px;top:829px;font-size:13px;line-height:15px;color:#000080;letter-spacing:-0.3px">539</div><div class="code" style="left:11px;top:848px;font-size:13px;line-height:15px;color:#000080;letter-spacing:-0.3px">540</div><div style="left:43.5px;top:853.5px;width:5px;height:5px;background:radial-gradient(circle at 30% 30%,#60d0ff 0,#0000d0 45%,#000080 100%);border-radius:50%"></div><div class="code" style="left:11px;top:867px;font-size:13px;line-height:15px;color:#000080;letter-spacing:-0.3px">541</div><div class="code" style="left:11px;top:886px;font-size:13px;line-height:15px;color:#000080;letter-spacing:-0.3px">542</div><div style="left:43.5px;top:891.5px;width:5px;height:5px;background:radial-gradient(circle at 30% 30%,#60d0ff 0,#0000d0 45%,#000080 100%);border-radius:50%"></div><div class="code" style="left:11px;top:905px;font-size:13px;line-height:15px;color:#000080;letter-spacing:-0.3px">543</div><div class="code" style="left:11px;top:924px;font-size:13px;line-height:15px;color:#000080;letter-spacing:-0.3px">544</div><div class="code" style="left:11px;top:943px;font-size:13px;line-height:15px;color:#000080;letter-spacing:-0.3px">545</div><div style="left:43.5px;top:948.5px;width:5px;height:5px;background:radial-gradient(circle at 30% 30%,#60d0ff 0,#0000d0 45%,#000080 100%);border-radius:50%"></div><div class="code" style="left:11px;top:962px;font-size:13px;line-height:15px;color:#000080;letter-spacing:-0.3px">546</div><div class="code" style="left:11px;top:981px;font-size:13px;line-height:15px;color:#000080;letter-spacing:-0.3px">547</div><div class="code" style="left:11px;top:1000px;font-size:13px;line-height:15px;color:#000080;letter-spacing:-0.3px">548</div><div style="left:43.5px;top:1005.5px;width:5px;height:5px;background:radial-gradient(circle at 30% 30%,#60d0ff 0,#0000d0 45%,#000080 100%);border-radius:50%"></div><div class="code" style="left:11px;top:1019px;font-size:13px;line-height:15px;color:#000080;letter-spacing:-0.3px">549</div><div style="left:1654px;top:220px;width:21px;height:816px;background:repeating-conic-gradient(#ffffff 0% 25%, #c4c4c0 0% 50%) 0 0/2px 2px"></div><div style="left:1654px;top:220px;width:20px;height:19px;background:#404040"></div><div style="left:1654px;top:220px;width:19px;height:18px;background:#d4d0c8"></div><div style="left:1655px;top:221px;width:18px;height:17px;background:#808080"></div><div style="left:1655px;top:221px;width:17px;height:16px;background:#ffffff"></div><div style="left:1656px;top:222px;width:16px;height:15px;background:#d4d0c8"></div><svg style="position:absolute;left:1659px;top:227px" width="9" height="5" viewBox="0 0 9 5" shape-rendering="crispEdges"><path d="M0 5H9L4.5 0Z" fill="#000"/></svg><div style="left:1654px;top:492px;width:20px;height:21px;background:#404040"></div><div style="left:1654px;top:492px;width:19px;height:20px;background:#d4d0c8"></div><div style="left:1655px;top:493px;width:18px;height:19px;background:#808080"></div><div style="left:1655px;top:493px;width:17px;height:18px;background:#ffffff"></div><div style="left:1656px;top:494px;width:16px;height:17px;background:#d4d0c8"></div><div style="left:1654px;top:1017px;width:20px;height:19px;background:#404040"></div><div style="left:1654px;top:1017px;width:19px;height:18px;background:#d4d0c8"></div><div style="left:1655px;top:1018px;width:18px;height:17px;background:#808080"></div><div style="left:1655px;top:1018px;width:17px;height:16px;background:#ffffff"></div><div style="left:1656px;top:1019px;width:16px;height:15px;background:#d4d0c8"></div><svg style="position:absolute;left:1659px;top:1024px" width="9" height="5" viewBox="0 0 9 5" shape-rendering="crispEdges"><path d="M0 0H9L4.5 5Z" fill="#000"/></svg><div style="left:1675px;top:170px;width:1px;height:890px;background:#ffffff"></div><div style="left:1676px;top:141px;width:3px;height:939px;background:repeating-conic-gradient(#c8c8c4 0% 25%, #d4d0c8 0% 50%) 0 0/2px 2px"></div><div style="left:1679px;top:141px;width:1px;height:939px;background:#ffffff"></div><div style="left:38px;top:1036px;width:1616px;height:20px;background:#d4d0c8"></div><div style="left:390px;top:1036px;width:1244px;height:20px;background:repeating-conic-gradient(#ffffff 0% 25%, #c4c4c0 0% 50%) 0 0/2px 2px"></div><div style="left:39px;top:1036px;width:20px;height:20px;background:#404040"></div><div style="left:39px;top:1036px;width:19px;height:19px;background:#d4d0c8"></div><div style="left:40px;top:1037px;width:18px;height:18px;background:#808080"></div><div style="left:40px;top:1037px;width:17px;height:17px;background:#ffffff"></div><div style="left:41px;top:1038px;width:16px;height:16px;background:#d4d0c8"></div><svg style="position:absolute;left:45px;top:1041px" width="5" height="9" viewBox="0 0 5 9" shape-rendering="crispEdges"><path d="M5 0V9L0 4.5Z" fill="#000"/></svg><div style="left:59px;top:1036px;width:331px;height:20px;background:#404040"></div><div style="left:59px;top:1036px;width:330px;height:19px;background:#d4d0c8"></div><div style="left:60px;top:1037px;width:329px;height:18px;background:#808080"></div><div style="left:60px;top:1037px;width:328px;height:17px;background:#ffffff"></div><div style="left:61px;top:1038px;width:327px;height:16px;background:#d4d0c8"></div><div style="left:1634px;top:1036px;width:20px;height:20px;background:#404040"></div><div style="left:1634px;top:1036px;width:19px;height:19px;background:#d4d0c8"></div><div style="left:1635px;top:1037px;width:18px;height:18px;background:#808080"></div><div style="left:1635px;top:1037px;width:17px;height:17px;background:#ffffff"></div><div style="left:1636px;top:1038px;width:16px;height:16px;background:#d4d0c8"></div><svg style="position:absolute;left:1641px;top:1041px" width="5" height="9" viewBox="0 0 5 9" shape-rendering="crispEdges"><path d="M0 0V9L5 4.5Z" fill="#000"/></svg><div style="left:1654px;top:1036px;width:20px;height:20px;background:#d4d0c8"></div><div style="left:1px;top:1036px;width:37px;height:20px;background:#d4d0c8"></div><div style="left:3px;top:1040px;width:32px;height:16px;background:#000080"></div><div class="t" style="left:4px;top:1041px;font-size:13px;line-height:15px;color:#ffffff;font-family:'Liberation Mono',monospace;letter-spacing:0px">1514</div><div style="left:0px;top:1057px;width:1674px;height:1px;background:#ffffff"></div><div style="left:0px;top:1060px;width:60px;height:20px;background:#ffffff"></div><div style="left:0px;top:1060px;width:59px;height:19px;background:#808080"></div><div style="left:1px;top:1061px;width:58px;height:18px;background:#d4d0c8"></div><div style="left:61px;top:1060px;width:84px;height:20px;background:#ffffff"></div><div style="left:61px;top:1060px;width:83px;height:19px;background:#808080"></div><div style="left:62px;top:1061px;width:82px;height:18px;background:#d4d0c8"></div><div style="left:146px;top:1060px;width:73px;height:20px;background:#ffffff"></div><div style="left:146px;top:1060px;width:72px;height:19px;background:#808080"></div><div style="left:147px;top:1061px;width:71px;height:18px;background:#d4d0c8"></div><div style="left:221px;top:1060px;width:74px;height:20px;background:#ffffff"></div><div style="left:221px;top:1060px;width:73px;height:19px;background:#808080"></div><div style="left:222px;top:1061px;width:72px;height:18px;background:#d4d0c8"></div><div class="t" style="left:80px;top:1063px;font-size:13px;line-height:15px;color:#000;">1076:  94</div><div class="t" style="left:148px;top:1063px;font-size:13px;line-height:15px;color:#000;">Modified</div><div class="t" style="left:223px;top:1063px;font-size:13px;line-height:15px;color:#000;">Insert</div><div style="left:297px;top:1060px;width:1377px;height:1px;background:#808080"></div><div style="left:296px;top:1060px;width:1px;height:20px;background:#ffffff"></div><div style="left:297px;top:1060px;width:1px;height:20px;background:#808080"></div><div style="left:299px;top:1061px;width:45px;height:18px;background:#d4d0c8"></div><svg style="position:absolute;left:299px;top:1060px" width="46" height="20" viewBox="0 0 46 20" shape-rendering="crispEdges"><path d="M2.5 1L6.5 18.5H37.5L43.5 1" fill="none" stroke="#000" stroke-width="1.1"/></svg><div class="t" style="left:306px;top:1063px;font-size:13px;line-height:15px;color:#000;">Code</div><div class="t" style="left:357px;top:1063px;font-size:13px;line-height:15px;color:#000;text-decoration:underline;letter-spacing:-0.15px">[CnPack] CnPack стала Технологическим Партнером Embarcadero (Embarcadero Technology Partner (ETP)) в 2009 году. Давайте сделаем CnPack еще лучше!</div><div style="left:1681px;top:145px;width:225px;height:1px;background:#ffffff"></div><div style="left:1681px;top:146px;width:225px;height:1px;background:#808080"></div><div style="left:1681px;top:148px;width:225px;height:1px;background:#ffffff"></div><div style="left:1681px;top:149px;width:225px;height:1px;background:#808080"></div><div style="left:1909px;top:143px;width:10px;height:11px;background:#808080"></div><div style="left:1909px;top:143px;width:9px;height:10px;background:#ffffff"></div><div style="left:1910px;top:144px;width:8px;height:9px;background:#d4d0c8"></div><svg style="position:absolute;left:1911px;top:145px" width="7" height="7" viewBox="0 0 7 7" shape-rendering="crispEdges"><path d="M0 0L7 7M7 0L0 7" stroke="#000" stroke-width="1"/></svg><div style="left:1677px;top:177px;width:243px;height:1px;background:#ffffff"></div><div style="left:1680px;top:154px;width:111px;height:24px;background:#d4d0c8"></div><div style="left:1680px;top:155px;width:1px;height:23px;background:#ffffff"></div><div style="left:1681px;top:154px;width:108px;height:1px;background:#ffffff"></div><div style="left:1789px;top:155px;width:1px;height:22px;background:#808080"></div><div style="left:1790px;top:156px;width:1px;height:21px;background:#404040"></div><div class="t" style="left:1686px;top:158px;font-size:13px;line-height:15px;color:#000;">Project Manager</div><div style="left:1881px;top:154px;width:19px;height:20px;background:#404040"></div><div style="left:1881px;top:154px;width:18px;height:19px;background:#d4d0c8"></div><div style="left:1882px;top:155px;width:17px;height:18px;background:#808080"></div><div style="left:1882px;top:155px;width:16px;height:17px;background:#ffffff"></div><div style="left:1883px;top:156px;width:15px;height:16px;background:#d4d0c8"></div><div style="left:1900px;top:154px;width:19px;height:20px;background:#404040"></div><div style="left:1900px;top:154px;width:18px;height:19px;background:#d4d0c8"></div><div style="left:1901px;top:155px;width:17px;height:18px;background:#808080"></div><div style="left:1901px;top:155px;width:16px;height:17px;background:#ffffff"></div><div style="left:1902px;top:156px;width:15px;height:16px;background:#d4d0c8"></div><svg style="position:absolute;left:1888px;top:159px" width="5" height="9" viewBox="0 0 5 9" shape-rendering="crispEdges"><path d="M5 0V9L0 4.5Z" fill="#000"/></svg><svg style="position:absolute;left:1907px;top:159px" width="5" height="9" viewBox="0 0 5 9" shape-rendering="crispEdges"><path d="M0 0V9L5 4.5Z" fill="#000"/></svg><div style="left:1683px;top:181px;width:234px;height:1px;background:#808080"></div><div style="left:1683px;top:182px;width:234px;height:1px;background:#ffffff"></div><div style="left:1698px;top:185px;width:153px;height:22px;background:#ffffff"></div><div style="left:1698px;top:185px;width:152px;height:21px;background:#808080"></div><div style="left:1699px;top:186px;width:151px;height:20px;background:#d4d0c8"></div><div style="left:1699px;top:186px;width:150px;height:19px;background:#404040"></div><div style="left:1700px;top:187px;width:149px;height:18px;background:#ffffff"></div><div class="t" style="left:1703px;top:188px;font-size:13px;line-height:15px;color:#000;">YandexMarket.dll</div><div style="left:1831px;top:187px;width:18px;height:18px;background:#404040"></div><div style="left:1831px;top:187px;width:17px;height:17px;background:#d4d0c8"></div><div style="left:1832px;top:188px;width:16px;height:16px;background:#808080"></div><div style="left:1832px;top:188px;width:15px;height:15px;background:#ffffff"></div><div style="left:1833px;top:189px;width:14px;height:14px;background:#d4d0c8"></div><svg style="position:absolute;left:1837px;top:194px" width="7" height="4" viewBox="0 0 7 4" shape-rendering="crispEdges"><path d="M0 0H7L3.5 4Z" fill="#000"/></svg><div style="left:1868px;top:187px;width:1px;height:18px;background:#808080"></div><div style="left:1869px;top:187px;width:1px;height:18px;background:#ffffff"></div><div style="left:1683px;top:210px;width:234px;height:1px;background:#808080"></div><div style="left:1683px;top:211px;width:234px;height:1px;background:#ffffff"></div><div style="left:1683px;top:214px;width:234px;height:1px;background:#808080"></div><div style="left:1683px;top:215px;width:234px;height:1px;background:#ffffff"></div><div class="t" style="left:1688px;top:220px;font-size:13px;line-height:15px;color:#000;">Files</div><div style="left:1683px;top:238px;width:233px;height:814px;background:#ffffff"></div><div style="left:1683px;top:238px;width:232px;height:813px;background:#808080"></div><div style="left:1684px;top:239px;width:231px;height:812px;background:#d4d0c8"></div><div style="left:1684px;top:239px;width:230px;height:811px;background:#404040"></div><div style="left:1685px;top:240px;width:229px;height:810px;background:#ffffff"></div><div style="left:1917px;top:178px;width:1px;height:902px;background:#808080"></div><div style="left:1710px;top:260px;width:1px;height:99px;background:repeating-linear-gradient(to bottom,#808080 0 1px,transparent 1px 2px)"></div><div style="left:1729px;top:281px;width:1px;height:76px;background:repeating-linear-gradient(to bottom,#808080 0 1px,transparent 1px 2px)"></div><div style="left:1729px;top:376px;width:1px;height:85px;background:repeating-linear-gradient(to bottom,#808080 0 1px,transparent 1px 2px)"></div><svg width="0" height="0" style="position:absolute"><defs><pattern id="chk" width="2" height="2" patternUnits="userSpaceOnUse"><rect width="2" height="2" fill="#fff"/><rect width="1" height="1" fill="#c0c0c0"/><rect x="1" y="1" width="1" height="1" fill="#c0c0c0"/></pattern></defs></svg><div style="left:1687px;top:248px;width:9px;height:9px;background:#808080"></div><div style="left:1688px;top:249px;width:7px;height:7px;background:#fff"></div><div style="left:1689px;top:252px;width:5px;height:1px;background:#000"></div><div style="left:1697px;top:252px;width:3px;height:1px;background:repeating-linear-gradient(to right,#808080 0 1px,transparent 1px 2px)"></div><svg style="position:absolute;left:1701px;top:243px;overflow:visible" width="17" height="16" viewBox="0 0 17 16" shape-rendering="auto"><path d="M7.5 0.5h8v7h-8z" fill="#a0a0a0" stroke="#000" stroke-width="1"/><rect x="9" y="2" width="5" height="4" fill="#30e0f0"/><rect x="15" y="5" width="2" height="4" fill="#000"/><path d="M0.5 3.5h8v10h-8z" fill="#ffffff" stroke="#606060" stroke-width="1"/><rect x="2" y="5" width="4" height="1" fill="#000080"/><rect x="2" y="7" width="4" height="1" fill="#000080"/><rect x="2" y="9" width="4" height="1" fill="#000080"/><path d="M3.5 5.5h7l2 2v8h-9z" fill="#ffffff" stroke="#000" stroke-width="1"/><rect x="5" y="8" width="6" height="1.3" fill="#000080"/><rect x="5" y="10.5" width="6" height="1.3" fill="#000080"/><rect x="5" y="13" width="6" height="1.3" fill="#000080"/></svg><div class="t" style="left:1723px;top:244px;font-size:13px;line-height:15px;color:#000;">YandexMarket</div><div style="left:1706px;top:267px;width:9px;height:9px;background:#808080"></div><div style="left:1707px;top:268px;width:7px;height:7px;background:#fff"></div><div style="left:1708px;top:271px;width:5px;height:1px;background:#000"></div><div style="left:1716px;top:271px;width:3px;height:1px;background:repeating-linear-gradient(to right,#808080 0 1px,transparent 1px 2px)"></div><svg style="position:absolute;left:1720px;top:262px;overflow:visible" width="17" height="16" viewBox="0 0 17 16" shape-rendering="auto"><path d="M3.5 0.5h13v11h-13z" fill="#ffffff" stroke="#000" stroke-width="1"/><rect x="4" y="1" width="12" height="2" fill="#000080"/><rect x="4" y="3" width="12" height="8" fill="url(#chk)"/><rect x="16" y="1" width="1" height="11" fill="#000"/><rect x="4" y="11" width="13" height="1" fill="#000"/><path d="M0.5 5.5h7l1 1v7h-8z" fill="#ffffff" stroke="#e0e060" stroke-width="1"/><path d="M2.5 6.5h7l1 1v8h-8z" fill="#ffffff" stroke="#000" stroke-width="1"/><rect x="10" y="8" width="1" height="8" fill="#000"/><rect x="4" y="9" width="5" height="1.3" fill="#000080"/><rect x="4" y="11" width="5" height="1.3" fill="#000080"/><rect x="4" y="13" width="5" height="1.3" fill="#000080"/></svg><div class="t" style="left:1742px;top:263px;font-size:13px;line-height:15px;color:#000;">Parser.exe</div><div style="left:1731px;top:288px;width:9px;height:1px;background:repeating-linear-gradient(to right,#808080 0 1px,transparent 1px 2px)"></div><svg style="position:absolute;left:1741px;top:281px;overflow:visible" width="15" height="16" viewBox="0 0 15 16" shape-rendering="auto"><path d="M0.5 0.5h10l3 3v12h-13z" fill="#ffffff" stroke="#000" stroke-width="1"/><rect x="13" y="4" width="1" height="12" fill="#000"/><rect x="1" y="15" width="13" height="1" fill="#000"/><rect x="3" y="3" width="7" height="1.3" fill="#10a090"/><rect x="4" y="6" width="7" height="1.3" fill="#10a090"/><rect x="2" y="8" width="9" height="1.3" fill="#e01010"/><path d="M0 6.5l3 2l-3 2z" fill="#000080" /><rect x="4" y="10.5" width="7" height="1.3" fill="#10a090"/><rect x="3" y="13" width="7" height="1.3" fill="#10a090"/><rect x="11" y="1" width="2" height="2" fill="#c0c0c0"/></svg><div class="t" style="left:1760px;top:282px;font-size:13px;line-height:15px;color:#000;">Logger.pas</div><div style="left:1731px;top:307px;width:9px;height:1px;background:repeating-linear-gradient(to right,#808080 0 1px,transparent 1px 2px)"></div><div style="left:1725px;top:305px;width:9px;height:9px;background:#808080"></div><div style="left:1726px;top:306px;width:7px;height:7px;background:#fff"></div><div style="left:1727px;top:309px;width:5px;height:1px;background:#000"></div><div style="left:1729px;top:307px;width:1px;height:5px;background:#000"></div><div style="left:1735px;top:309px;width:3px;height:1px;background:repeating-linear-gradient(to right,#808080 0 1px,transparent 1px 2px)"></div><svg style="position:absolute;left:1740px;top:300px;overflow:visible" width="15" height="16" viewBox="0 0 15 16" shape-rendering="auto"><path d="M1.5 0.5h9l3 3v12h-12z" fill="#ffffff" stroke="#000" stroke-width="1"/><rect x="13" y="4" width="1" height="12" fill="#000"/><rect x="4" y="2" width="6" height="1.5" fill="#000080"/><rect x="4" y="4.5" width="7" height="1.5" fill="#000080"/><rect x="1" y="7" width="6" height="1.5" fill="#000080"/><path d="M0.5 8.5h10v7h-10z" fill="#a8a8a8" stroke="#000" stroke-width="1"/><rect x="1" y="9" width="9" height="1" fill="#d0d0d0"/><rect x="2" y="12" width="3" height="1" fill="#606060"/><rect x="6" y="12" width="3" height="1" fill="#606060"/></svg><div class="t" style="left:1760px;top:301px;font-size:13px;line-height:15px;color:#000;">UnitMain</div><div style="left:1731px;top:326px;width:9px;height:1px;background:repeating-linear-gradient(to right,#808080 0 1px,transparent 1px 2px)"></div><svg style="position:absolute;left:1741px;top:319px;overflow:visible" width="15" height="16" viewBox="0 0 15 16" shape-rendering="auto"><path d="M0.5 0.5h10l3 3v12h-13z" fill="#ffffff" stroke="#000" stroke-width="1"/><rect x="13" y="4" width="1" height="12" fill="#000"/><rect x="1" y="15" width="13" height="1" fill="#000"/><rect x="3" y="3" width="7" height="1.3" fill="#10a090"/><rect x="4" y="6" width="7" height="1.3" fill="#10a090"/><rect x="2" y="8" width="9" height="1.3" fill="#e01010"/><path d="M0 6.5l3 2l-3 2z" fill="#000080" /><rect x="4" y="10.5" width="7" height="1.3" fill="#10a090"/><rect x="3" y="13" width="7" height="1.3" fill="#10a090"/><rect x="11" y="1" width="2" height="2" fill="#c0c0c0"/></svg><div class="t" style="left:1760px;top:320px;font-size:13px;line-height:15px;color:#000;">UnitParser.pas</div><div style="left:1731px;top:345px;width:9px;height:1px;background:repeating-linear-gradient(to right,#808080 0 1px,transparent 1px 2px)"></div><div style="left:1725px;top:343px;width:9px;height:9px;background:#808080"></div><div style="left:1726px;top:344px;width:7px;height:7px;background:#fff"></div><div style="left:1727px;top:347px;width:5px;height:1px;background:#000"></div><div style="left:1729px;top:345px;width:1px;height:5px;background:#000"></div><div style="left:1735px;top:347px;width:3px;height:1px;background:repeating-linear-gradient(to right,#808080 0 1px,transparent 1px 2px)"></div><svg style="position:absolute;left:1740px;top:338px;overflow:visible" width="15" height="16" viewBox="0 0 15 16" shape-rendering="auto"><path d="M1.5 0.5h9l3 3v12h-12z" fill="#ffffff" stroke="#000" stroke-width="1"/><rect x="13" y="4" width="1" height="12" fill="#000"/><rect x="4" y="2" width="6" height="1.5" fill="#000080"/><rect x="4" y="4.5" width="7" height="1.5" fill="#000080"/><rect x="1" y="7" width="6" height="1.5" fill="#000080"/><path d="M0.5 8.5h10v7h-10z" fill="#a8a8a8" stroke="#000" stroke-width="1"/><rect x="1" y="9" width="9" height="1" fill="#d0d0d0"/><rect x="2" y="12" width="3" height="1" fill="#606060"/><rect x="6" y="12" width="3" height="1" fill="#606060"/></svg><div class="t" style="left:1760px;top:339px;font-size:13px;line-height:15px;color:#000;">UnitQuery</div><div style="left:1706px;top:362px;width:9px;height:9px;background:#808080"></div><div style="left:1707px;top:363px;width:7px;height:7px;background:#fff"></div><div style="left:1708px;top:366px;width:5px;height:1px;background:#000"></div><div style="left:1716px;top:366px;width:3px;height:1px;background:repeating-linear-gradient(to right,#808080 0 1px,transparent 1px 2px)"></div><svg style="position:absolute;left:1720px;top:357px;overflow:visible" width="17" height="16" viewBox="0 0 17 16" shape-rendering="auto"><path d="M3.5 0.5h13v11h-13z" fill="#ffffff" stroke="#000" stroke-width="1"/><rect x="4" y="1" width="12" height="2" fill="#000080"/><rect x="4" y="3" width="12" height="8" fill="url(#chk)"/><rect x="16" y="1" width="1" height="11" fill="#000"/><rect x="4" y="11" width="13" height="1" fill="#000"/><path d="M0.5 5.5h7l1 1v7h-8z" fill="#ffffff" stroke="#e0e060" stroke-width="1"/><path d="M2.5 6.5h7l1 1v8h-8z" fill="#ffffff" stroke="#000" stroke-width="1"/><rect x="10" y="8" width="1" height="8" fill="#000"/><rect x="4" y="9" width="5" height="1.3" fill="#000080"/><rect x="4" y="11" width="5" height="1.3" fill="#000080"/><rect x="4" y="13" width="5" height="1.3" fill="#000080"/></svg><div style="left:1740px;top:357px;width:115px;height:18px;background:#d4d0c8"></div><div class="t" style="left:1742px;top:358px;font-size:13px;line-height:15px;color:#000;font-weight:bold">YandexMarket.dll</div><div style="left:1731px;top:383px;width:9px;height:1px;background:repeating-linear-gradient(to right,#808080 0 1px,transparent 1px 2px)"></div><svg style="position:absolute;left:1741px;top:376px;overflow:visible" width="15" height="16" viewBox="0 0 15 16" shape-rendering="auto"><path d="M0.5 0.5h10l3 3v12h-13z" fill="#ffffff" stroke="#000" stroke-width="1"/><rect x="13" y="4" width="1" height="12" fill="#000"/><rect x="1" y="15" width="13" height="1" fill="#000"/><rect x="3" y="3" width="7" height="1.3" fill="#10a090"/><rect x="4" y="6" width="7" height="1.3" fill="#10a090"/><rect x="2" y="8" width="9" height="1.3" fill="#e01010"/><path d="M0 6.5l3 2l-3 2z" fill="#000080" /><rect x="4" y="10.5" width="7" height="1.3" fill="#10a090"/><rect x="3" y="13" width="7" height="1.3" fill="#10a090"/><rect x="11" y="1" width="2" height="2" fill="#c0c0c0"/></svg><div class="t" style="left:1760px;top:377px;font-size:13px;line-height:15px;color:#000;">Logger.pas</div><div style="left:1731px;top:402px;width:9px;height:1px;background:repeating-linear-gradient(to right,#808080 0 1px,transparent 1px 2px)"></div><svg style="position:absolute;left:1741px;top:395px;overflow:visible" width="15" height="16" viewBox="0 0 15 16" shape-rendering="auto"><path d="M0.5 0.5h10l3 3v12h-13z" fill="#ffffff" stroke="#000" stroke-width="1"/><rect x="13" y="4" width="1" height="12" fill="#000"/><rect x="1" y="15" width="13" height="1" fill="#000"/><rect x="3" y="3" width="7" height="1.3" fill="#10a090"/><rect x="4" y="6" width="7" height="1.3" fill="#10a090"/><rect x="2" y="8" width="9" height="1.3" fill="#e01010"/><path d="M0 6.5l3 2l-3 2z" fill="#000080" /><rect x="4" y="10.5" width="7" height="1.3" fill="#10a090"/><rect x="3" y="13" width="7" height="1.3" fill="#10a090"/><rect x="11" y="1" width="2" height="2" fill="#c0c0c0"/></svg><div class="t" style="left:1760px;top:396px;font-size:13px;line-height:15px;color:#000;">SHDocVw_TLB.pas</div><div style="left:1731px;top:421px;width:9px;height:1px;background:repeating-linear-gradient(to right,#808080 0 1px,transparent 1px 2px)"></div><svg style="position:absolute;left:1741px;top:414px;overflow:visible" width="15" height="16" viewBox="0 0 15 16" shape-rendering="auto"><path d="M0.5 0.5h10l3 3v12h-13z" fill="#ffffff" stroke="#000" stroke-width="1"/><rect x="13" y="4" width="1" height="12" fill="#000"/><rect x="1" y="15" width="13" height="1" fill="#000"/><rect x="3" y="3" width="7" height="1.3" fill="#10a090"/><rect x="4" y="6" width="7" height="1.3" fill="#10a090"/><rect x="2" y="8" width="9" height="1.3" fill="#e01010"/><path d="M0 6.5l3 2l-3 2z" fill="#000080" /><rect x="4" y="10.5" width="7" height="1.3" fill="#10a090"/><rect x="3" y="13" width="7" height="1.3" fill="#10a090"/><rect x="11" y="1" width="2" height="2" fill="#c0c0c0"/></svg><div class="t" style="left:1760px;top:415px;font-size:13px;line-height:15px;color:#000;">UnitParser.pas</div><div style="left:1731px;top:440px;width:9px;height:1px;background:repeating-linear-gradient(to right,#808080 0 1px,transparent 1px 2px)"></div><div style="left:1725px;top:438px;width:9px;height:9px;background:#808080"></div><div style="left:1726px;top:439px;width:7px;height:7px;background:#fff"></div><div style="left:1727px;top:442px;width:5px;height:1px;background:#000"></div><div style="left:1729px;top:440px;width:1px;height:5px;background:#000"></div><div style="left:1735px;top:442px;width:3px;height:1px;background:repeating-linear-gradient(to right,#808080 0 1px,transparent 1px 2px)"></div><svg style="position:absolute;left:1740px;top:433px;overflow:visible" width="15" height="16" viewBox="0 0 15 16" shape-rendering="auto"><path d="M1.5 0.5h9l3 3v12h-12z" fill="#ffffff" stroke="#000" stroke-width="1"/><rect x="13" y="4" width="1" height="12" fill="#000"/><rect x="4" y="2" width="6" height="1.5" fill="#000080"/><rect x="4" y="4.5" width="7" height="1.5" fill="#000080"/><rect x="1" y="7" width="6" height="1.5" fill="#000080"/><path d="M0.5 8.5h10v7h-10z" fill="#a8a8a8" stroke="#000" stroke-width="1"/><rect x="1" y="9" width="9" height="1" fill="#d0d0d0"/><rect x="2" y="12" width="3" height="1" fill="#606060"/><rect x="6" y="12" width="3" height="1" fill="#606060"/></svg><div class="t" style="left:1760px;top:434px;font-size:13px;line-height:15px;color:#000;">UnitQuery</div><div style="left:1731px;top:459px;width:9px;height:1px;background:repeating-linear-gradient(to right,#808080 0 1px,transparent 1px 2px)"></div><svg style="position:absolute;left:1741px;top:452px;overflow:visible" width="15" height="16" viewBox="0 0 15 16" shape-rendering="auto"><path d="M0.5 0.5h10l3 3v12h-13z" fill="#ffffff" stroke="#000" stroke-width="1"/><rect x="13" y="4" width="1" height="12" fill="#000"/><rect x="1" y="15" width="13" height="1" fill="#000"/><rect x="3" y="3" width="7" height="1.3" fill="#10a090"/><rect x="4" y="6" width="7" height="1.3" fill="#10a090"/><rect x="2" y="8" width="9" height="1.3" fill="#e01010"/><path d="M0 6.5l3 2l-3 2z" fill="#000080" /><rect x="4" y="10.5" width="7" height="1.3" fill="#10a090"/><rect x="3" y="13" width="7" height="1.3" fill="#10a090"/><rect x="11" y="1" width="2" height="2" fill="#c0c0c0"/></svg><div class="t" style="left:1760px;top:453px;font-size:13px;line-height:15px;color:#000;">YandexMarket_TLB.pas</div><div style="left:1683px;top:1055px;width:233px;height:21px;background:#ffffff"></div><div style="left:1683px;top:1055px;width:232px;height:20px;background:#808080"></div><div style="left:1684px;top:1056px;width:231px;height:19px;background:#d4d0c8"></div><div style="left:1685px;top:1057px;width:80px;height:17px;overflow:hidden"><div class="t" style="left:1px;top:1px;font-size:13px;line-height:15px;color:#000">C:\Projects\delphi\YandexMarket\YandexMarket.bpg</div></div><div style="left:1760px;top:1061px;width:158px;height:19px;background:#000"></div><div class="t" style="left:1765px;top:1062px;font-size:16px;line-height:17px;color:#e0e0e0;letter-spacing:0.2px">14:37  Вс 27-янв-13</div><svg style="position:absolute;left:14px;top:59px;overflow:visible" width="16" height="16" viewBox="0 0 16 16" shape-rendering="auto"><path d="M4.5 3.5h6l4 4v8h-10z" fill="#fcf4a0" stroke="#404040"/><path d="M10.5 3.5v4h4" fill="#ffffff" stroke="#808080"/><path d="M2.5 0.5h3v2h2v3h-2v2h-3v-2h-2v-3h2z" fill="#40b8f0" stroke="#0070b0" stroke-width="1"/></svg><svg style="position:absolute;left:37px;top:59px;overflow:visible" width="16" height="16" viewBox="0 0 16 16" shape-rendering="auto"><path d="M0.5 2.5h5l1 1h6v10h-12z" fill="#f0e070" stroke="#807030"/><rect x="1" y="5" width="11" height="7" fill="#fcf4a0"/><path d="M3 6c3 0 6 1 7 5l2-1l-2 5l-4-3l2-1c-1-2-3-3-5-3z" fill="#50a0e0" stroke="#2060a0" stroke-width="0.7"/></svg><svg style="position:absolute;left:61px;top:64px;overflow:visible" width="9" height="5" viewBox="0 0 9 5" shape-rendering="auto"><path d="M0 0h9l-4.5 5z" fill="#000000" /></svg><svg style="position:absolute;left:77px;top:59px;overflow:visible" width="16" height="16" viewBox="0 0 16 16" shape-rendering="auto"><path d="M1.5 1.5h13l1 1v12l-1 1h-13l-1-1v-12z" fill="#3c78c0" stroke="#203c70"/><rect x="3" y="2" width="10" height="6" fill="#f8f0a0"/><rect x="4" y="3" width="8" height="1" fill="#8090b0"/><rect x="4" y="5" width="8" height="1" fill="#8090b0"/><rect x="3" y="10" width="10" height="5" fill="#b0d0f0"/><rect x="3" y="13" width="10" height="2" fill="#ffffff"/></svg><div style="left:100px;top:58px;width:1px;height:19px;background:#808080"></div><div style="left:101px;top:58px;width:1px;height:19px;background:#ffffff"></div><svg style="position:absolute;left:108px;top:59px;overflow:visible" width="16" height="16" viewBox="0 0 16 16" shape-rendering="auto"><path d="M4.5 0.5h10l1 1v10l-1 1h-10z" fill="#a0a0a0" stroke="#404040"/><path d="M0.5 3.5h11l1 1v10l-1 1h-11l-1-1v-10z" fill="#606060" stroke="#303030"/><rect x="2" y="4" width="9" height="5" fill="#f8f0a0"/><rect x="3" y="5" width="7" height="1" fill="#7080b0"/><rect x="3" y="7" width="7" height="1" fill="#7080b0"/><rect x="2" y="11" width="9" height="2" fill="#70a8e0"/><rect x="2" y="13" width="9" height="2" fill="#ffffff"/></svg><svg style="position:absolute;left:131px;top:59px;overflow:visible" width="16" height="16" viewBox="0 0 16 16" shape-rendering="auto"><path d="M6.5 1.5h4l1 1h4v7h-9z" fill="#f0e070" stroke="#807030"/><rect x="7" y="4" width="8" height="5" fill="#fcf4a0"/><path d="M1.5 9v-3c0-2 2-3 5-3" fill="none" stroke="#e02020" stroke-width="1" /><path d="M6 1l2 2l-2 2z" fill="#e02020" /><path d="M1.5 9.5h10v5h-10z" fill="#d0d0d0" stroke="#606060"/><rect x="7" y="11" width="1" height="1" fill="#e04020"/><rect x="9" y="11" width="1" height="1" fill="#20a020"/></svg><div style="left:154px;top:58px;width:1px;height:19px;background:#808080"></div><div style="left:155px;top:58px;width:1px;height:19px;background:#ffffff"></div><svg style="position:absolute;left:162px;top:59px;overflow:visible" width="16" height="16" viewBox="0 0 16 16" shape-rendering="auto"><path d="M7.5 0.5h4l3 3v8h-7z" fill="#ffffff" stroke="#808080"/><path d="M0.5 4.5h5l1 1h7v9h-13z" fill="#f0e070" stroke="#505020"/><rect x="1" y="6" width="12" height="5" fill="#fcf4a0"/><path d="M0.5 14.5l2-4h13l-2 4z" fill="#f8e858" stroke="#505020"/><path d="M4 4h3v2h2v3h-2v2h-3v-2h-2v-3h2z" fill="#40b0f0" stroke="#0060a0" stroke-width="0.6"/></svg><svg style="position:absolute;left:185px;top:59px;overflow:visible" width="16" height="16" viewBox="0 0 16 16" shape-rendering="auto"><path d="M7.5 0.5h4l3 3v8h-7z" fill="#ffffff" stroke="#808080"/><path d="M0.5 4.5h5l1 1h7v9h-13z" fill="#f0e070" stroke="#505020"/><rect x="1" y="6" width="12" height="5" fill="#fcf4a0"/><path d="M0.5 14.5l2-4h13l-2 4z" fill="#f8e858" stroke="#505020"/><rect x="4" y="6" width="5" height="3" fill="#e03020"/></svg><svg style="position:absolute;left:208px;top:59px;overflow:visible" width="16" height="16" viewBox="0 0 16 16" shape-rendering="auto"><path d="M0.5 1.5h6l1 1h7v12h-14z" fill="#f8f080" stroke="#000" stroke-width="1"/><path d="M2 6l2 3l5-5" fill="none" stroke="#000000" stroke-width="1.6" /><path d="M6 12l2 2l5-5" fill="none" stroke="#000000" stroke-width="1.6" /></svg><svg style="position:absolute;left:244px;top:59px;overflow:visible" width="16" height="16" viewBox="0 0 16 16" shape-rendering="auto"><path d="M1 9l8-7l6 4l-8 7z" fill="#f0d020" stroke="#000" stroke-width="0.8"/><path d="M1 7l8-7l6 4l-8 7z" fill="#2a7ad0" stroke="#002060" stroke-width="0.8"/><path d="M6.5 4.5c1-1 3-1 3 0c0 1-1.5 1-1.5 2" fill="none" stroke="#f0e000" stroke-width="1.3" /><rect x="7" y="8" width="1.5" height="1.2" fill="#f0e000"/></svg><svg style="position:absolute;left:267px;top:59px;overflow:visible" width="16" height="16" viewBox="0 0 16 16" shape-rendering="auto"><path d="M1 9l8-7l6 4l-8 7z" fill="#f0d020" stroke="#000" stroke-width="0.8"/><path d="M1 7l8-7l6 4l-8 7z" fill="#2a7ad0" stroke="#002060" stroke-width="0.8"/><path d="M6.5 4.5c1-1 3-1 3 0c0 1-1.5 1-1.5 2" fill="none" stroke="#f0e000" stroke-width="1.3" /><rect x="7" y="8" width="1.5" height="1.2" fill="#f0e000"/></svg><svg style="position:absolute;left:289px;top:59px;overflow:visible" width="16" height="16" viewBox="0 0 16 16" shape-rendering="auto"><rect x="1" y="1" width="5" height="5" fill="#e02020"/><rect x="6" y="1" width="5" height="5" fill="#20a020"/><rect x="1" y="6" width="5" height="5" fill="#2030d0"/><rect x="6" y="6" width="5" height="5" fill="#f0e020"/><path d="M1 1h10v10h-10z" fill="none" stroke="#000000" stroke-width="1" /><path d="M10 9.5c0-2 5-2 5 0.5c0 1.5-2.5 1.5-2.5 3.5" fill="none" stroke="#000080" stroke-width="1.6" /><rect x="11.5" y="14.5" width="2" height="1.5" fill="#000080"/></svg><svg style="position:absolute;left:14px;top:89px;overflow:visible" width="16" height="16" viewBox="0 0 16 16" shape-rendering="auto"><path d="M6.5 0.5h5l2 2v9h-7z" fill="#f8f080" stroke="#404040"/><path d="M1.5 4.5h5l2 2v9h-7z" fill="#f8f080" stroke="#404040"/></svg><svg style="position:absolute;left:37px;top:89px;overflow:visible" width="16" height="16" viewBox="0 0 16 16" shape-rendering="auto"><path d="M5.5 0.5h10v9h-10z" fill="#50a0c0" stroke="#204050"/><rect x="6" y="1" width="9" height="2" fill="#0080a0"/><rect x="6" y="3" width="9" height="1" fill="#e0ffff"/><path d="M0.5 6.5h10v9h-10z" fill="#6a9ae0" stroke="#204050"/><rect x="1" y="7" width="9" height="2" fill="#0080a0"/><rect x="1" y="9" width="9" height="1" fill="#e0ffff"/></svg><svg style="position:absolute;left:60px;top:89px;overflow:visible" width="16" height="16" viewBox="0 0 16 16" shape-rendering="auto"><rect x="0" y="0" width="11" height="11" fill="#7c7c7c"/><path d="M7.5 6.5h5l2-2v11h-7z" fill="#808080" stroke="#ffffff"/><path d="M12 1l2 2M14 1l-2 2" fill="none" stroke="#fff" stroke-width="1" /><path d="M2 12v3M1 13h2" fill="none" stroke="#606060" stroke-width="1" /></svg><div style="left:84px;top:88px;width:1px;height:19px;background:#808080"></div><div style="left:85px;top:88px;width:1px;height:19px;background:#ffffff"></div><svg style="position:absolute;left:91px;top:89px;overflow:visible" width="16" height="16" viewBox="0 0 16 16" shape-rendering="auto"><path d="M0.5 1.5h15v12h-15z" fill="#6a9ae0" stroke="#205070"/><rect x="1" y="2" width="14" height="2" fill="#008098"/><rect x="1" y="4" width="14" height="1" fill="#e0ffff"/><rect x="2" y="2" width="1" height="1" fill="#fff"/><rect x="12" y="2" width="1" height="1" fill="#fff"/><rect x="14" y="2" width="1" height="1" fill="#fff"/></svg><svg style="position:absolute;left:127px;top:89px;overflow:visible" width="16" height="16" viewBox="0 0 16 16" shape-rendering="auto"><path d="M1 5a4.5 4.5 0 1 0 9 0a4.5 4.5 0 1 0 -9 0z" fill="#30e0f0" stroke="#000" stroke-width="1"/><rect x="6" y="5" width="4" height="1.5" fill="#fff"/><path d="M12 0.5v4" fill="none" stroke="#000000" stroke-width="1.5" /><path d="M10 3h4l-2 3z" fill="#000000" /><rect x="1" y="12" width="1" height="4" fill="#000000"/><rect x="3" y="12" width="2" height="4" fill="#000000"/><rect x="6" y="12" width="1" height="4" fill="#000000"/><rect x="8" y="12" width="2" height="4" fill="#000000"/><rect x="11" y="12" width="1" height="4" fill="#000000"/></svg><svg style="position:absolute;left:150px;top:89px;overflow:visible" width="16" height="16" viewBox="0 0 16 16" shape-rendering="auto"><path d="M0.5 1.5h4l1 1h4v6h-9z" fill="#f8f080" stroke="#404040"/><path d="M12 4.5v4" fill="none" stroke="#000000" stroke-width="1.5" /><path d="M10 7h4l-2 3z" fill="#000000" /><rect x="1" y="12" width="1" height="4" fill="#000000"/><rect x="3" y="12" width="2" height="4" fill="#000000"/><rect x="6" y="12" width="1" height="4" fill="#000000"/><rect x="8" y="12" width="2" height="4" fill="#000000"/><rect x="11" y="12" width="1" height="4" fill="#000000"/></svg><svg style="position:absolute;left:177px;top:89px;overflow:visible" width="16" height="16" viewBox="0 0 16 16" shape-rendering="auto"><path d="M0.5 0.5l9 7.5l-9 7.5z" fill="#20c020" stroke="#108010"/></svg><svg style="position:absolute;left:197px;top:94px;overflow:visible" width="9" height="5" viewBox="0 0 9 5" shape-rendering="auto"><path d="M0 0h9l-4.5 5z" fill="#000000" /></svg><svg style="position:absolute;left:215px;top:89px;overflow:visible" width="16" height="16" viewBox="0 0 16 16" shape-rendering="auto"><rect x="0" y="0" width="4" height="15" fill="#7c7c7c"/><rect x="1" y="15" width="4" height="1" fill="#fff"/><rect x="6" y="0" width="4" height="15" fill="#7c7c7c"/><rect x="7" y="15" width="4" height="1" fill="#fff"/></svg><svg style="position:absolute;left:236px;top:89px;overflow:visible" width="16" height="16" viewBox="0 0 16 16" shape-rendering="auto"><rect x="0" y="0" width="14" height="13" fill="#7c7c7c"/><rect x="2" y="2" width="10" height="9" fill="#fff"/><rect x="3" y="3" width="8" height="7" fill="#d4d0c8"/><path d="M7 4a2 2.5 0 1 0 0.1 0" fill="none" stroke="#808080" stroke-width="1" /><rect x="1" y="13" width="14" height="1" fill="#fff"/></svg><div style="left:259px;top:88px;width:1px;height:19px;background:#808080"></div><div style="left:260px;top:88px;width:1px;height:19px;background:#ffffff"></div><svg style="position:absolute;left:271px;top:89px;overflow:visible" width="16" height="16" viewBox="0 0 16 16" shape-rendering="auto"><path d="M1 1.5h2M4 2h1M6 3l1 1" fill="none" stroke="#e02020" stroke-width="1" stroke-dasharray="1 1"/><path d="M4 5h6l-3 3z" fill="#e02020" /><rect x="6" y="3" width="2" height="3" fill="#e02020"/><path d="M3 10l2-2h6v6l-2 2h-6z" fill="#3c80d0" stroke="#1040a0" stroke-width="0.8"/><rect x="5" y="9" width="5" height="1" fill="#c0e0ff"/></svg><svg style="position:absolute;left:290px;top:89px;overflow:visible" width="16" height="16" viewBox="0 0 16 16" shape-rendering="auto"><path d="M1 6c0-4 8-6 12-3" fill="none" stroke="#e02020" stroke-width="1" stroke-dasharray="1 1"/><path d="M10 5h6l-3 3z" fill="#e02020" /><path d="M1 10l2-2h6v6l-2 2h-6z" fill="#3c80d0" stroke="#1040a0" stroke-width="0.8"/><rect x="3" y="9" width="5" height="1" fill="#c0e0ff"/></svg><svg style="position:absolute;left:329px;top:82px;overflow:visible" width="16" height="16" viewBox="0 0 16 16" shape-rendering="auto"><path d="M0.5 0.5v15l3.5-3.5l3 6l2-1l-3-6h5z" fill="#fff" stroke="#000" stroke-width="1"/></svg><svg style="position:absolute;left:367px;top:83px;overflow:visible" width="24" height="24" viewBox="0 0 24 24" shape-rendering="auto"><path d="M0.5 0.5h22v18h-22z" fill="#fff" stroke="#000"/><rect x="1" y="1" width="21" height="2" fill="#000080"/><rect x="18" y="1" width="1" height="1" fill="#fff"/><rect x="20" y="1" width="1" height="1" fill="#fff"/><path d="M3.5 4.5h17v11h-17z" fill="#fff" stroke="#000"/><rect x="4" y="5" width="16" height="2" fill="#000080"/></svg><svg style="position:absolute;left:395px;top:82px;overflow:visible" width="24" height="24" viewBox="0 0 24 24" shape-rendering="auto"><rect x="0" y="0" width="20" height="3" fill="#000080"/><rect x="1" y="1" width="4" height="1" fill="#fff"/><rect x="7" y="1" width="3" height="1" fill="#fff"/><rect x="12" y="1" width="3" height="1" fill="#fff"/><rect x="17" y="1" width="2" height="1" fill="#fff"/><path d="M0.5 2.5h10v13h-10z" fill="#fff" stroke="#000"/><rect x="2" y="5" width="5" height="1" fill="#000080"/><rect x="2" y="8" width="7" height="1" fill="#000080"/><rect x="2" y="11" width="5" height="1" fill="#000080"/><rect x="2" y="13" width="5" height="1" fill="#000080"/></svg><svg style="position:absolute;left:426px;top:81px;overflow:visible" width="24" height="24" viewBox="0 0 24 24" shape-rendering="auto"><path d="M0.5 0.5h9v11h-9z" fill="#fff" stroke="#000"/><rect x="2" y="2" width="5" height="1" fill="#000080"/><rect x="2" y="5" width="6" height="1" fill="#000080"/><rect x="1" y="7" width="8" height="2" fill="#000080"/><path d="M7 8v12l3-3l2 4l2-1l-2-4h4z" fill="#fff" stroke="#000" stroke-width="1"/></svg><svg style="position:absolute;left:454px;top:85px;overflow:visible" width="24" height="24" viewBox="0 0 24 24" shape-rendering="auto"><path d="M0 14l6-14h3l6 14h-3.5l-1.2-3h-6.6l-1.2 3z M5.7 8h3.6l-1.8-4.5z" fill="#000000" fill-rule="evenodd"/></svg><svg style="position:absolute;left:478px;top:85px;overflow:visible" width="24" height="24" viewBox="0 0 24 24" shape-rendering="auto"><path d="M0.5 0.5h21v13h-21z" fill="#fff" stroke="#000" stroke-width="1"/><rect x="0" y="0" width="22" height="2" fill="#000000"/><rect x="0" y="0" width="2" height="14" fill="#000000"/><text x="3" y="11.5" font-family="Liberation Sans" font-weight="bold" font-size="11" fill="#000080">ab</text><path d="M16 3h3M17.5 3v8M16 11h3" fill="none" stroke="#000000" stroke-width="1" /></svg><svg style="position:absolute;left:510px;top:83px;overflow:visible" width="24" height="24" viewBox="0 0 24 24" shape-rendering="auto"><path d="M0.5 0.5h15v17h-15z" fill="#fff" stroke="#000"/><rect x="2" y="2" width="3" height="1" fill="#000080"/><rect x="2" y="5" width="12" height="1" fill="#000080"/><rect x="2" y="8" width="12" height="1" fill="#000080"/><rect x="2" y="11" width="12" height="1" fill="#000080"/><rect x="2" y="14" width="12" height="1" fill="#000080"/></svg><svg style="position:absolute;left:537px;top:86px;overflow:visible" width="24" height="24" viewBox="0 0 24 24" shape-rendering="auto"><path d="M0.5 0.5h18v11h-18z" fill="#d4d0c8" stroke="#000"/><rect x="1" y="1" width="17" height="1" fill="#fff"/><rect x="1" y="1" width="1" height="10" fill="#fff"/><text x="4.5" y="9.5" font-family="Liberation Sans" font-weight="bold" font-size="8" fill="#000000">OK</text></svg><svg style="position:absolute;left:568px;top:86px;overflow:visible" width="24" height="24" viewBox="0 0 24 24" shape-rendering="auto"><rect x="0" y="0" width="13" height="12" fill="#000"/><rect x="2" y="2" width="11" height="10" fill="#fff"/><path d="M4 4l6 5.5M10 4l-6 5.5" fill="none" stroke="#000000" stroke-width="2.6" /></svg><svg style="position:absolute;left:596px;top:86px;overflow:visible" width="24" height="24" viewBox="0 0 24 24" shape-rendering="auto"><path d="M0.5 6a5.5 5.5 0 1 0 11 0a5.5 5.5 0 1 0 -11 0z" fill="#fff" stroke="#000" stroke-width="1"/><path d="M3 6a3 3 0 1 0 6 0a3 3 0 1 0 -6 0z" fill="#000000" /></svg><svg style="position:absolute;left:620px;top:82px;overflow:visible" width="24" height="24" viewBox="0 0 24 24" shape-rendering="auto"><path d="M0.5 0.5h19v18h-19z" fill="#fff" stroke="#000"/><rect x="14" y="1" width="5" height="17" fill="#d4d0c8"/><path d="M14.5 1v17" fill="none" stroke="#000000" stroke-width="1" /><rect x="15" y="2" width="3" height="3" fill="#fff"/><rect x="16" y="3" width="1" height="1" fill="#000000"/><rect x="15" y="14" width="3" height="3" fill="#fff"/><rect x="16" y="15" width="1" height="1" fill="#000000"/><rect x="2" y="3" width="10" height="1" fill="#000080"/><rect x="2" y="6" width="8" height="1" fill="#000080"/><rect x="1" y="9" width="13" height="3" fill="#000080"/><rect x="2" y="14" width="10" height="1" fill="#000080"/></svg><svg style="position:absolute;left:649px;top:83px;overflow:visible" width="24" height="24" viewBox="0 0 24 24" shape-rendering="auto"><path d="M0.5 0.5h19v6h-19z" fill="#fff" stroke="#000"/><rect x="14" y="1" width="5" height="5" fill="#d4d0c8"/><rect x="16" y="3" width="1" height="1" fill="#000000"/><rect x="2" y="3" width="10" height="1" fill="#000080"/><path d="M1.5 6.5h17v12h-17z" fill="#fff" stroke="#000"/><rect x="3" y="9" width="13" height="2" fill="#000080"/><rect x="3" y="12" width="13" height="2" fill="#000080"/><rect x="3" y="15" width="13" height="1" fill="#000080"/></svg><svg style="position:absolute;left:675px;top:89px;overflow:visible" width="24" height="24" viewBox="0 0 24 24" shape-rendering="auto"><rect x="0" y="0" width="22" height="6" fill="#000"/><rect x="1" y="1" width="4" height="4" fill="#d4d0c8"/><rect x="6" y="1" width="4" height="4" fill="#d4d0c8"/><rect x="11" y="1" width="4" height="4" fill="#e8e8e8"/><rect x="16" y="1" width="5" height="4" fill="#d4d0c8"/><rect x="2" y="2" width="2" height="2" fill="#000"/><rect x="17" y="2" width="2" height="2" fill="#000"/><rect x="7" y="2" width="2" height="2" fill="#808080"/><rect x="12" y="2" width="2" height="2" fill="#808080"/></svg><svg style="position:absolute;left:704px;top:82px;overflow:visible" width="24" height="24" viewBox="0 0 24 24" shape-rendering="auto"><path d="M0.5 2.5h19v16h-19z" fill="none" stroke="#808080"/><path d="M1.5 3.5h17v14h-17z" fill="none" stroke="#fff" stroke-width="1" /><rect x="3" y="1" width="6" height="3" fill="#000080"/></svg><svg style="position:absolute;left:732px;top:82px;overflow:visible" width="24" height="24" viewBox="0 0 24 24" shape-rendering="auto"><path d="M0.5 2.5h19v16h-19z" fill="none" stroke="#808080"/><path d="M1.5 3.5h17v14h-17z" fill="none" stroke="#fff" stroke-width="1" /><rect x="3" y="1" width="6" height="3" fill="#000080"/><rect x="4" y="7" width="2" height="2" fill="#000000"/><rect x="8" y="7" width="8" height="1" fill="#000080"/><rect x="4" y="11" width="2" height="2" fill="#000000"/><rect x="8" y="11" width="8" height="1" fill="#000080"/><rect x="4" y="15" width="2" height="2" fill="#000000"/><rect x="8" y="15" width="8" height="1" fill="#000080"/></svg><svg style="position:absolute;left:760px;top:82px;overflow:visible" width="24" height="24" viewBox="0 0 24 24" shape-rendering="auto"><path d="M0.5 0.5h19v18h-19z" fill="none" stroke="#808080"/><path d="M1.5 1.5h17v16h-17z" fill="none" stroke="#fff" stroke-width="1" /></svg><svg style="position:absolute;left:788px;top:81px;overflow:visible" width="24" height="24" viewBox="0 0 24 24" shape-rendering="auto"><path d="M6.5 0.5h15v10h-15z" fill="#fff" stroke="#000"/><rect x="7" y="1" width="14" height="2" fill="#000080"/><rect x="16" y="4" width="5" height="6" fill="#c0c0c0"/><path d="M2.5 11.5h10v6h-10z" fill="#d4d0c8" stroke="#000"/><text x="3.5" y="16.5" font-family="Liberation Sans" font-weight="bold" font-size="6" fill="#000000">OK</text><rect x="6" y="5" width="6" height="4" fill="#fff"/><rect x="7" y="6" width="4" height="1" fill="#000080"/><path d="M11 7v11l3-3l2 4l2-1l-2-4h4z" fill="#fff" stroke="#000" stroke-width="1"/></svg><svg style="position:absolute;left:855px;top:29px;overflow:visible" width="16" height="16" viewBox="0 0 16 16" shape-rendering="auto"><path d="M3.5 2.5l2-2h6v4l-2 2h-6z" fill="#a0c0e0" stroke="#304060" stroke-width="1"/><rect x="4" y="4" width="5" height="2" fill="#4a80c0"/><path d="M0.5 5.5l2-2h6v5l-2 2h-6z" fill="#a0c0e0" stroke="#304060" stroke-width="1"/><rect x="1" y="7" width="5" height="3" fill="#4a80c0"/><path d="M13 1v5" fill="none" stroke="#000000" stroke-width="1.2" /><path d="M11 5h4l-2 2.5z" fill="#000000" /><path d="M5 14.5h8v-3" fill="none" stroke="#404040" stroke-width="1.2" /><rect x="7" y="12" width="1" height="1" fill="#e02020"/></svg><svg style="position:absolute;left:877px;top:29px;overflow:visible" width="16" height="16" viewBox="0 0 16 16" shape-rendering="auto"><path d="M3.5 2.5l2-2h6v4l-2 2h-6z" fill="#a0c0e0" stroke="#304060" stroke-width="1"/><rect x="4" y="4" width="5" height="2" fill="#4a80c0"/><path d="M0.5 5.5l2-2h6v5l-2 2h-6z" fill="#a0c0e0" stroke="#304060" stroke-width="1"/><rect x="1" y="7" width="5" height="3" fill="#4a80c0"/><path d="M10 7l6 4.5l-6 4.5z" fill="#20c020" /></svg><svg style="position:absolute;left:1171px;top:29px;overflow:visible" width="16" height="16" viewBox="0 0 16 16" shape-rendering="auto"><path d="M1 8a7 7 0 1 0 14 0a7 7 0 1 0 -14 0z" fill="#4080d0" stroke="#203070" stroke-width="0.8"/><path d="M3 9c2-4 8-5 10-3" fill="none" stroke="#fff" stroke-width="2" /><path d="M5 13c3 2 8 1 10-3" fill="#e06030" /></svg><div style="left:912px;top:45px;width:19px;height:11px;background:repeating-linear-gradient(to bottom,#e8c0c0 0 1px,#f0e4e4 1px 2px)"></div><div style="left:912px;top:45px;width:9px;height:6px;background:#a8b0d8"></div><svg style="position:absolute;left:5px;top:175px;overflow:visible" width="16" height="16" viewBox="0 0 16 16" shape-rendering="auto"><path d="M2.5 1.5h13v11h-13z" fill="#2050a0" stroke="#404040"/><rect x="4" y="3" width="10" height="8" fill="#e0f0ff"/><rect x="8" y="5" width="4" height="4" fill="#4080c0"/><rect x="4" y="8" width="4" height="3" fill="#f0c060"/><path d="M0 13h16l-2 3h-12z" fill="#808080" /></svg><div style="left:25px;top:172px;width:23px;height:23px;background:#fff"></div><div style="left:25px;top:172px;width:22px;height:22px;background:#808080"></div><div style="left:26px;top:173px;width:21px;height:21px;background:#d4d0c8"></div><svg style="position:absolute;left:29px;top:175px;overflow:visible" width="16" height="16" viewBox="0 0 16 16" shape-rendering="auto"><path d="M3.5 1.5h9l3 3v11h-12z" fill="#c0d0f0" stroke="#404080"/><rect x="5" y="4" width="5" height="1" fill="#000080"/><rect x="5" y="7" width="7" height="1" fill="#000080"/><rect x="5" y="11" width="8" height="3" fill="#e8e8e8"/><rect x="6" y="12" width="6" height="1" fill="#607080"/><path d="M1 0l4 2l-2 1l3 3l-5-2l2-1z" fill="#e0e020" stroke="#808000" stroke-width="0.5"/></svg><div style="left:49px;top:174px;width:1px;height:19px;background:#808080"></div><div style="left:50px;top:174px;width:1px;height:19px;background:#ffffff"></div><svg style="position:absolute;left:55px;top:175px;overflow:visible" width="16" height="16" viewBox="0 0 16 16" shape-rendering="auto"><path d="M4.5 3.5h6l4 4v8h-10z" fill="#fcf4a0" stroke="#404040"/><path d="M10.5 3.5v4h4" fill="#ffffff" stroke="#808080"/><path d="M2.5 0.5h3v2h2v3h-2v2h-3v-2h-2v-3h2z" fill="#40b8f0" stroke="#0070b0" stroke-width="1"/></svg><div style="left:76px;top:174px;width:1px;height:19px;background:#808080"></div><div style="left:77px;top:174px;width:1px;height:19px;background:#ffffff"></div><svg style="position:absolute;left:82px;top:175px;overflow:visible" width="16" height="16" viewBox="0 0 16 16" shape-rendering="auto"><path d="M0.5 2.5h5l1 1h6v10h-12z" fill="#f0e070" stroke="#807030"/><rect x="1" y="5" width="11" height="7" fill="#fcf4a0"/><path d="M3 6c3 0 6 1 7 5l2-1l-2 5l-4-3l2-1c-1-2-3-3-5-3z" fill="#50a0e0" stroke="#2060a0" stroke-width="0.7"/></svg><svg style="position:absolute;left:106px;top:180px;overflow:visible" width="9" height="5" viewBox="0 0 9 5" shape-rendering="auto"><path d="M0 0h9l-4.5 5z" fill="#000000" /></svg><svg style="position:absolute;left:122px;top:175px;overflow:visible" width="16" height="16" viewBox="0 0 16 16" shape-rendering="auto"><path d="M4.5 0.5h10l1 1v10l-1 1h-10z" fill="#a0a0a0" stroke="#404040"/><path d="M0.5 3.5h11l1 1v10l-1 1h-11l-1-1v-10z" fill="#606060" stroke="#303030"/><rect x="2" y="4" width="9" height="5" fill="#f8f0a0"/><rect x="3" y="5" width="7" height="1" fill="#7080b0"/><rect x="3" y="7" width="7" height="1" fill="#7080b0"/><rect x="2" y="11" width="9" height="2" fill="#70a8e0"/><rect x="2" y="13" width="9" height="2" fill="#ffffff"/></svg><svg style="position:absolute;left:145px;top:175px;overflow:visible" width="16" height="16" viewBox="0 0 16 16" shape-rendering="auto"><rect x="0" y="0" width="1" height="1" fill="#000000"/><rect x="8" y="0" width="1" height="1" fill="#000000"/><rect x="15" y="0" width="1" height="1" fill="#000000"/><rect x="0" y="15" width="1" height="1" fill="#000000"/><rect x="15" y="15" width="1" height="1" fill="#000000"/><rect x="15" y="7" width="1" height="1" fill="#000000"/><path d="M2.5 2.5h11v11h-11z" fill="#5080c0" stroke="#203050"/><rect x="3" y="3" width="10" height="5" fill="#f8f0a0"/><rect x="4" y="4" width="8" height="1" fill="#7080b0"/><rect x="4" y="6" width="8" height="1" fill="#7080b0"/><rect x="3" y="9" width="10" height="2" fill="#90c0f0"/></svg><div style="left:166px;top:174px;width:1px;height:19px;background:#808080"></div><div style="left:167px;top:174px;width:1px;height:19px;background:#ffffff"></div><svg style="position:absolute;left:172px;top:175px;overflow:visible" width="16" height="16" viewBox="0 0 16 16" shape-rendering="auto"><path d="M7.5 0.5h4l3 3v8h-7z" fill="#ffffff" stroke="#808080"/><path d="M0.5 4.5h5l1 1h7v9h-13z" fill="#f0e070" stroke="#505020"/><rect x="1" y="6" width="12" height="5" fill="#fcf4a0"/><path d="M0.5 14.5l2-4h13l-2 4z" fill="#f8e858" stroke="#505020"/><path d="M4 4h3v2h2v3h-2v2h-3v-2h-2v-3h2z" fill="#40b0f0" stroke="#0060a0" stroke-width="0.6"/></svg><svg style="position:absolute;left:195px;top:175px;overflow:visible" width="16" height="16" viewBox="0 0 16 16" shape-rendering="auto"><path d="M7.5 0.5h4l3 3v8h-7z" fill="#ffffff" stroke="#808080"/><path d="M0.5 4.5h5l1 1h7v9h-13z" fill="#f0e070" stroke="#505020"/><rect x="1" y="6" width="12" height="5" fill="#fcf4a0"/><path d="M0.5 14.5l2-4h13l-2 4z" fill="#f8e858" stroke="#505020"/><rect x="4" y="6" width="5" height="3" fill="#e03020"/></svg><svg style="position:absolute;left:218px;top:175px;overflow:visible" width="16" height="16" viewBox="0 0 16 16" shape-rendering="auto"><path d="M0.5 1.5h6l1 1h7v12h-14z" fill="#f8f080" stroke="#000" stroke-width="1"/><path d="M2 6l2 3l5-5" fill="none" stroke="#000000" stroke-width="1.6" /><path d="M6 12l2 2l5-5" fill="none" stroke="#000000" stroke-width="1.6" /></svg><svg style="position:absolute;left:241px;top:175px;overflow:visible" width="16" height="16" viewBox="0 0 16 16" shape-rendering="auto"><path d="M1 5a4.5 4.5 0 1 0 9 0a4.5 4.5 0 1 0 -9 0z" fill="#30e0f0" stroke="#000" stroke-width="1"/><rect x="6" y="5" width="4" height="1.5" fill="#fff"/><path d="M12 0.5v4" fill="none" stroke="#000000" stroke-width="1.5" /><path d="M10 3h4l-2 3z" fill="#000000" /><rect x="1" y="12" width="1" height="4" fill="#000000"/><rect x="3" y="12" width="2" height="4" fill="#000000"/><rect x="6" y="12" width="1" height="4" fill="#000000"/><rect x="8" y="12" width="2" height="4" fill="#000000"/><rect x="11" y="12" width="1" height="4" fill="#000000"/></svg><svg style="position:absolute;left:265px;top:175px;overflow:visible" width="16" height="16" viewBox="0 0 16 16" shape-rendering="auto"><path d="M3 13l4-9M6 13l4-9" fill="none" stroke="#3040c0" stroke-width="1.3" /><rect x="9" y="11" width="2" height="2" fill="#000080"/><rect x="12" y="11" width="2" height="2" fill="#000080"/><path d="M10 1h2v2h2v2h-2v2h-2v-2h-2v-2h2z" fill="#e02020" /></svg><svg style="position:absolute;left:288px;top:175px;overflow:visible" width="16" height="16" viewBox="0 0 16 16" shape-rendering="auto"><path d="M3 13l4-9M6 13l4-9" fill="none" stroke="#3040c0" stroke-width="1.3" /><rect x="9" y="11" width="2" height="2" fill="#000080"/><rect x="12" y="11" width="2" height="2" fill="#000080"/><rect x="9" y="2" width="7" height="3" fill="#f0f000"/></svg><div style="left:308px;top:174px;width:1px;height:19px;background:#808080"></div><div style="left:309px;top:174px;width:1px;height:19px;background:#ffffff"></div><svg style="position:absolute;left:318px;top:175px;overflow:visible" width="16" height="16" viewBox="0 0 16 16" shape-rendering="auto"><path d="M0.5 0.5l9 7.5l-9 7.5z" fill="#20c020" stroke="#108010"/></svg><svg style="position:absolute;left:338px;top:180px;overflow:visible" width="9" height="5" viewBox="0 0 9 5" shape-rendering="auto"><path d="M0 0h9l-4.5 5z" fill="#000000" /></svg><svg style="position:absolute;left:354px;top:175px;overflow:visible" width="16" height="16" viewBox="0 0 16 16" shape-rendering="auto"><rect x="0" y="0" width="14" height="13" fill="#7c7c7c"/><rect x="2" y="2" width="10" height="9" fill="#fff"/><rect x="3" y="3" width="8" height="7" fill="#d4d0c8"/><path d="M7 4a2 2.5 0 1 0 0.1 0" fill="none" stroke="#808080" stroke-width="1" /><rect x="1" y="13" width="14" height="1" fill="#fff"/></svg><svg style="position:absolute;left:377px;top:175px;overflow:visible" width="16" height="16" viewBox="0 0 16 16" shape-rendering="auto"><path d="M1 6c0-4 8-6 12-3" fill="none" stroke="#e02020" stroke-width="1" stroke-dasharray="1 1"/><path d="M10 5h6l-3 3z" fill="#e02020" /><path d="M1 10l2-2h6v6l-2 2h-6z" fill="#3c80d0" stroke="#1040a0" stroke-width="0.8"/><rect x="3" y="9" width="5" height="1" fill="#c0e0ff"/></svg><svg style="position:absolute;left:401px;top:175px;overflow:visible" width="16" height="16" viewBox="0 0 16 16" shape-rendering="auto"><path d="M1 1.5h2M4 2h1M6 3l1 1" fill="none" stroke="#e02020" stroke-width="1" stroke-dasharray="1 1"/><path d="M4 5h6l-3 3z" fill="#e02020" /><rect x="6" y="3" width="2" height="3" fill="#e02020"/><path d="M3 10l2-2h6v6l-2 2h-6z" fill="#3c80d0" stroke="#1040a0" stroke-width="0.8"/><rect x="5" y="9" width="5" height="1" fill="#c0e0ff"/></svg><svg style="position:absolute;left:423px;top:175px;overflow:visible" width="16" height="16" viewBox="0 0 16 16" shape-rendering="auto"><path d="M3 5c0-3 5-4 9-2" fill="none" stroke="#a0a0a0" stroke-width="1" stroke-dasharray="1 1"/><path d="M12 0l3 3l-3 3z" fill="#a0a0a0" /><path d="M1 9l2-2h6v7l-2 2h-6z" fill="#7c7c7c" /><rect x="4" y="10" width="3" height="3" fill="#fff"/></svg><svg style="position:absolute;left:446px;top:175px;overflow:visible" width="16" height="16" viewBox="0 0 16 16" shape-rendering="auto"><rect x="3" y="3" width="11" height="13" fill="#000"/><rect x="4" y="4" width="10" height="11" fill="#f0f0f0"/><path d="M6 6h5M8.5 6v8M6 14h5" fill="none" stroke="#000080" stroke-width="1.3" /><path d="M0 0l3 2l-3 2" fill="none" stroke="#000080" stroke-width="1.2" /><path d="M15 6v8" fill="none" stroke="#e02020" stroke-width="1" stroke-dasharray="1 1"/></svg><div style="left:467px;top:174px;width:1px;height:19px;background:#808080"></div><div style="left:468px;top:174px;width:1px;height:19px;background:#ffffff"></div><svg style="position:absolute;left:473px;top:175px;overflow:visible" width="16" height="16" viewBox="0 0 16 16" shape-rendering="auto"><path d="M5.5 1.5h6l3 3v11h-9z" fill="#c0d0f0" stroke="#6080a0"/><path d="M0 2l3-2l2 2l2-2l2 2l-2 3l2 0l-3 4l-1-3l-2 1z" fill="#f0f020" stroke="#909000" stroke-width="0.5"/><path d="M8 6l2-2l2 2l2-2l-1 5l-2 2z" fill="#f0f020" /><rect x="2" y="10" width="3" height="2" fill="#000000"/></svg><svg style="position:absolute;left:496px;top:175px;overflow:visible" width="16" height="16" viewBox="0 0 16 16" shape-rendering="auto"><path d="M0.5 2.5h8v10h-8z" fill="#e0e0e0" stroke="#606060"/><path d="M3.5 5.5h7v10h-7z" fill="#c0c0c0" stroke="#606060"/><rect x="10" y="1" width="5" height="14" fill="#80c0e0"/><rect x="11" y="8" width="4" height="1" fill="#2060a0"/><path d="M4 3l4-3l2 2l-4 3z" fill="#e0a040" /></svg><svg style="position:absolute;left:519px;top:175px;overflow:visible" width="16" height="16" viewBox="0 0 16 16" shape-rendering="auto"><path d="M0.5 1.5h9v13h-9z" fill="#d8d8d8" stroke="#808080"/><rect x="2" y="4" width="5" height="1" fill="#60a060"/><rect x="2" y="7" width="6" height="1" fill="#6080a0"/><path d="M6 11l8-11l2 1l-8 11z" fill="#c06030" stroke="#703010" stroke-width="0.5"/><path d="M9 12a3 3 0 1 0 6 0a3 3 0 1 0 -6 0z" fill="#2070a0" stroke="#103050" stroke-width="0.6"/></svg><svg style="position:absolute;left:543px;top:175px;overflow:visible" width="16" height="16" viewBox="0 0 16 16" shape-rendering="auto"><path d="M4.5 2.5h11v10h-11z" fill="#ffffff" stroke="#3050a0"/><rect x="5" y="3" width="10" height="2" fill="#3060c0"/><path d="M0.5 5.5h6v10h-6z" fill="#f0e090" stroke="#806020"/><path d="M3.5 8.5h6v7h-6z" fill="#c0e0ff" stroke="#3050a0"/><path d="M9 8a2.5 2.5 0 1 0 5 0a2.5 2.5 0 1 0 -5 0z" fill="#c04010" /><path d="M7 0l4 1l-3 2z" fill="#f0f020" /></svg><svg style="position:absolute;left:565px;top:175px;overflow:visible" width="16" height="16" viewBox="0 0 16 16" shape-rendering="auto"><path d="M1 1h5v5h-5z" fill="#f8e840" /><rect x="9" y="2" width="6" height="12" fill="#60c0c0"/><path d="M10 1l5 3v10h-5z" fill="#80d0c8" stroke="#207070" stroke-width="0.6"/><path d="M6 6a1.5 1.5 0 1 0 3 0a1.5 1.5 0 1 0 -3 0z M5 9h4l2 4h-2l-1-2l-2 5h-2l2-5z" fill="#000000" /><rect x="8" y="13" width="8" height="2" fill="#e0e8f0"/></svg><svg style="position:absolute;left:588px;top:175px;overflow:visible" width="16" height="16" viewBox="0 0 16 16" shape-rendering="auto"><path d="M3.5 0.5h6l3 3v7h-9z" fill="#f0f080" stroke="#606020"/><path d="M0.5 4.5h8v9h-8z" fill="#d0d0a0" stroke="#606020"/><rect x="2" y="7" width="5" height="1" fill="#3060c0"/><rect x="2" y="9" width="5" height="1" fill="#3060c0"/><path d="M8 11h3v-3l5 4.5l-5 4.5v-3h-3z" fill="#10b020" stroke="#006000" stroke-width="0.6"/></svg><div style="left:609px;top:174px;width:1px;height:19px;background:#808080"></div><div style="left:610px;top:174px;width:1px;height:19px;background:#ffffff"></div><svg style="position:absolute;left:616px;top:175px;overflow:visible" width="16" height="16" viewBox="0 0 16 16" shape-rendering="auto"><path d="M2.5 0.5h6l3 3v11h-9z" fill="#d8d8d8" stroke="#808080"/><path d="M8.5 4.5h6v10h-6z" fill="#e8e8e8" stroke="#606060"/><path d="M11 0h3v3h2l-3.5 3.5l-3.5-3.5h2z" fill="#20c020" /><path d="M0 12l7-6l4 3l-7 6z" fill="#f08090" stroke="#c04050" stroke-width="0.6"/></svg><svg style="position:absolute;left:638px;top:175px;overflow:visible" width="16" height="16" viewBox="0 0 16 16" shape-rendering="auto"><path d="M0.5 0.5h7l2 2v10h-9z" fill="#50c070" stroke="#208040"/><path d="M6.5 5.5h7l2 2v8h-9z" fill="#e06070" stroke="#a02030"/><text x="2" y="10" font-family="Liberation Sans" font-weight="bold" font-size="10" fill="#000080">1</text><text x="8" y="15" font-family="Liberation Sans" font-weight="bold" font-size="10" fill="#000080">2</text></svg><svg style="position:absolute;left:661px;top:175px;overflow:visible" width="16" height="16" viewBox="0 0 16 16" shape-rendering="auto"><path d="M7 1h2l1 2l2-1l1 2l-1 1l2 1v2l-2 1l1 2l-2 1l-1-1l-1 2h-2l-1-2l-2 1l-1-2l1-1l-2-1v-2l2-1l-1-2l2-1l1 2z" fill="#9090e0" stroke="#202060" stroke-width="0.8"/><path d="M6 6a2 2 0 1 0 4 0a2 2 0 1 0 -4 0z" fill="#202060" /><path d="M9 10h5v6h-5z" fill="#e0b020" stroke="#604000" stroke-width="0.6"/><path d="M9 12l5-2M9 15l5-2" fill="none" stroke="#604000" stroke-width="0.8" /></svg><div style="left:683px;top:174px;width:1px;height:19px;background:#808080"></div><div style="left:684px;top:174px;width:1px;height:19px;background:#ffffff"></div><svg style="position:absolute;left:689px;top:175px;overflow:visible" width="16" height="16" viewBox="0 0 16 16" shape-rendering="auto"><path d="M0.5 8a7.5 7.5 0 1 0 15 0a7.5 7.5 0 1 0 -15 0z" fill="#2a60c0" stroke="#c0d0f0" stroke-width="1"/><path d="M5.5 6c0-3 5-3 5 0c0 2-2.5 2-2.5 4" fill="none" stroke="#fff" stroke-width="1.8" /><rect x="7" y="11.5" width="2" height="2" fill="#fff"/></svg><svg style="position:absolute;left:712px;top:175px;overflow:visible" width="16" height="16" viewBox="0 0 16 16" shape-rendering="auto"><path d="M1 6a5 5 0 1 0 10 0a5 5 0 1 0 -10 0z" fill="#fcfc60" stroke="#808000" stroke-width="1"/><rect x="4" y="11" width="4" height="4" fill="#404040"/><rect x="6" y="15" width="8" height="1" fill="#808080"/><rect x="4" y="4" width="2" height="2" fill="#fff"/></svg><svg style="position:absolute;left:5px;top:199px;overflow:visible" width="16" height="16" viewBox="0 0 16 16" shape-rendering="auto"><path d="M7.5 4.5h7v11h-7z" fill="#d0d8e0" stroke="#8090a0"/><path d="M4.5 7.5h7v8h-7z" fill="#e0e8f0" stroke="#8090a0"/><path d="M3 2a4 4 0 1 0 8 0a4 4 0 1 0 -8 0z" fill="#80b0e0" stroke="#4060a0"/><path d="M4 7l-3 3" fill="none" stroke="#c07020" stroke-width="2" /><path d="M2 12l2 2l2-2l-2-2z" fill="#40c040" /></svg><svg style="position:absolute;left:28px;top:199px;overflow:visible" width="16" height="16" viewBox="0 0 16 16" shape-rendering="auto"><path d="M3.5 0.5h12v8h-12z" fill="#fff" stroke="#000" stroke-width="1.2"/><rect x="11" y="2" width="3" height="1" fill="#e02020"/><path d="M0.5 4.5h11v11h-11z" fill="#fff" stroke="#000" stroke-width="1.2"/><path d="M9 10h6v6h-6z" fill="#f0c060" stroke="#c09040" stroke-width="0.6"/></svg><div style="left:49px;top:198px;width:1px;height:19px;background:#808080"></div><div style="left:50px;top:198px;width:1px;height:19px;background:#ffffff"></div><svg style="position:absolute;left:55px;top:199px;overflow:visible" width="16" height="16" viewBox="0 0 16 16" shape-rendering="auto"><path d="M0.5 0.5h7l2 2v7h-9z" fill="#c8d8f0" stroke="#8090b0"/><path d="M1.5 8l3-6l3 6z" fill="#000080" /><path d="M10 1h3v4h2l-3.5 4l-3.5-4h2z" fill="#20b020" stroke="#008000" stroke-width="0.5"/><text x="1" y="16" font-family="Liberation Sans" font-weight="bold" font-size="7.5" fill="#900000">Intf</text></svg><svg style="position:absolute;left:78px;top:199px;overflow:visible" width="16" height="16" viewBox="0 0 16 16" shape-rendering="auto"><path d="M0.5 0.5h7l2 2v7h-9z" fill="#c8d8f0" stroke="#8090b0"/><path d="M1.5 8l3-6l3 6z" fill="#000080" /><path d="M10 1h3v4h2l-3.5 4l-3.5-4h2z" fill="#20b020" stroke="#008000" stroke-width="0.5"/><text x="0" y="16" font-family="Liberation Sans" font-weight="bold" font-size="7.5" fill="#900000">Impl</text></svg><svg style="position:absolute;left:500px;top:199px;overflow:visible" width="16" height="16" viewBox="0 0 16 16" shape-rendering="auto"><path d="M0.5 0.5h14v15h-14z" fill="#ffffff" stroke="#8080c0" stroke-width="1"/><rect x="15" y="1" width="1" height="15" fill="#6060a0"/><rect x="1" y="15" width="15" height="1" fill="#6060a0"/><rect x="2" y="2" width="12" height="1.3" fill="#1060e0"/><rect x="2" y="4" width="7" height="1.3" fill="#1060e0"/><rect x="2" y="6" width="12" height="1.3" fill="#1060e0"/><rect x="2" y="8" width="7" height="1.3" fill="#1060e0"/><rect x="2" y="10" width="12" height="1.3" fill="#1060e0"/><rect x="2" y="12" width="7" height="1.3" fill="#1060e0"/></svg><div style="left:520px;top:196px;width:23px;height:22px;background:#ffffff"></div><div style="left:520px;top:196px;width:22px;height:21px;background:#808080"></div><div style="left:521px;top:197px;width:21px;height:20px;background:repeating-conic-gradient(#ffffff 0% 25%, #c4c4c0 0% 50%) 0 0/2px 2px"></div><svg style="position:absolute;left:524px;top:200px;overflow:visible" width="16" height="16" viewBox="0 0 16 16" shape-rendering="auto"><path d="M0.5 0.5h14v15h-14z" fill="#ffffff" stroke="#8080c0" stroke-width="1"/><rect x="15" y="1" width="1" height="15" fill="#6060a0"/><rect x="1" y="15" width="15" height="1" fill="#6060a0"/><rect x="2" y="2" width="12" height="1.3" fill="#1060e0"/><rect x="5" y="4" width="6" height="1.3" fill="#1060e0"/><rect x="2" y="6" width="12" height="1.3" fill="#1060e0"/><rect x="5" y="8" width="6" height="1.3" fill="#1060e0"/><rect x="2" y="10" width="12" height="1.3" fill="#1060e0"/><rect x="5" y="12" width="6" height="1.3" fill="#1060e0"/></svg><svg style="position:absolute;left:1599px;top:150px;overflow:visible" width="13" height="12" viewBox="0 0 13 12" shape-rendering="auto"><path d="M0.5 5.5l5-5v3h6.5v4h-6.5v3z" fill="#f8f020" stroke="#000" stroke-width="1"/></svg><svg style="position:absolute;left:1621px;top:153px;overflow:visible" width="9" height="5" viewBox="0 0 9 5" shape-rendering="auto"><path d="M0 0h9l-4.5 5z" fill="#000000" /></svg><svg style="position:absolute;left:1639px;top:150px;overflow:visible" width="13" height="12" viewBox="0 0 13 12" shape-rendering="auto"><path d="M12.5 5.5l-5-5v3h-7v4h7v3z" fill="#909090" /></svg><svg style="position:absolute;left:1661px;top:153px;overflow:visible" width="9" height="5" viewBox="0 0 9 5" shape-rendering="auto"><path d="M0 0h9l-4.5 5z" fill="#909090" /></svg><svg style="position:absolute;left:1874px;top:188px;overflow:visible" width="16" height="16" viewBox="0 0 16 16" shape-rendering="auto"><path d="M4.5 2.5h10v7h-10z" fill="#fff" stroke="#203070"/><rect x="5" y="3" width="9" height="2" fill="#2050a0"/><path d="M0.5 7.5h9v7h-9z" fill="#f0e090" stroke="#404040"/><rect x="2" y="10" width="5" height="1" fill="#000080"/><path d="M12 0l2 2l2-2l-1 3z" fill="#e0e020" /></svg><svg style="position:absolute;left:1894px;top:188px;overflow:visible" width="16" height="16" viewBox="0 0 16 16" shape-rendering="auto"><path d="M2 2l12 12M14 2l-12 12" fill="none" stroke="#e01010" stroke-width="2.5" /></svg><svg style="position:absolute;left:0;top:0" width="24" height="24" viewBox="0 0 24 24"><defs><linearGradient id="g7" x1="0" y1="0" x2="1" y2="1"><stop offset="0" stop-color="#f0c040"/><stop offset="0.5" stop-color="#e8b020"/><stop offset="1" stop-color="#b07010"/></linearGradient><radialGradient id="gg" cx="0.4" cy="0.35" r="0.7"><stop offset="0" stop-color="#40d080"/><stop offset="0.5" stop-color="#10a050"/><stop offset="1" stop-color="#1040a0"/></radialGradient></defs><path d="M4 2h11.5v2.5l-6 13h4.5v3h-10v-3h2.5l5.5-12.5h-8z" fill="url(#g7)" stroke="#604008" stroke-width="0.5"/><circle cx="17.3" cy="11" r="4.8" fill="url(#gg)"/><circle cx="19.5" cy="6.3" r="0.8" fill="#e0ffff"/></svg><svg style="position:absolute;left:6px;top:122px;overflow:visible" width="12" height="15" viewBox="0 0 12 15" shape-rendering="auto"><path d="M0.5 0.5h8l3 3v11h-11z" fill="#ffffa0" stroke="#404000"/><rect x="2" y="4" width="8" height="1" fill="#000000"/><rect x="2" y="6" width="8" height="1" fill="#000000"/><rect x="2" y="8" width="8" height="1" fill="#000000"/><rect x="2" y="10" width="8" height="1" fill="#000000"/><rect x="2" y="12" width="8" height="1" fill="#000000"/></svg>
</body></html>
